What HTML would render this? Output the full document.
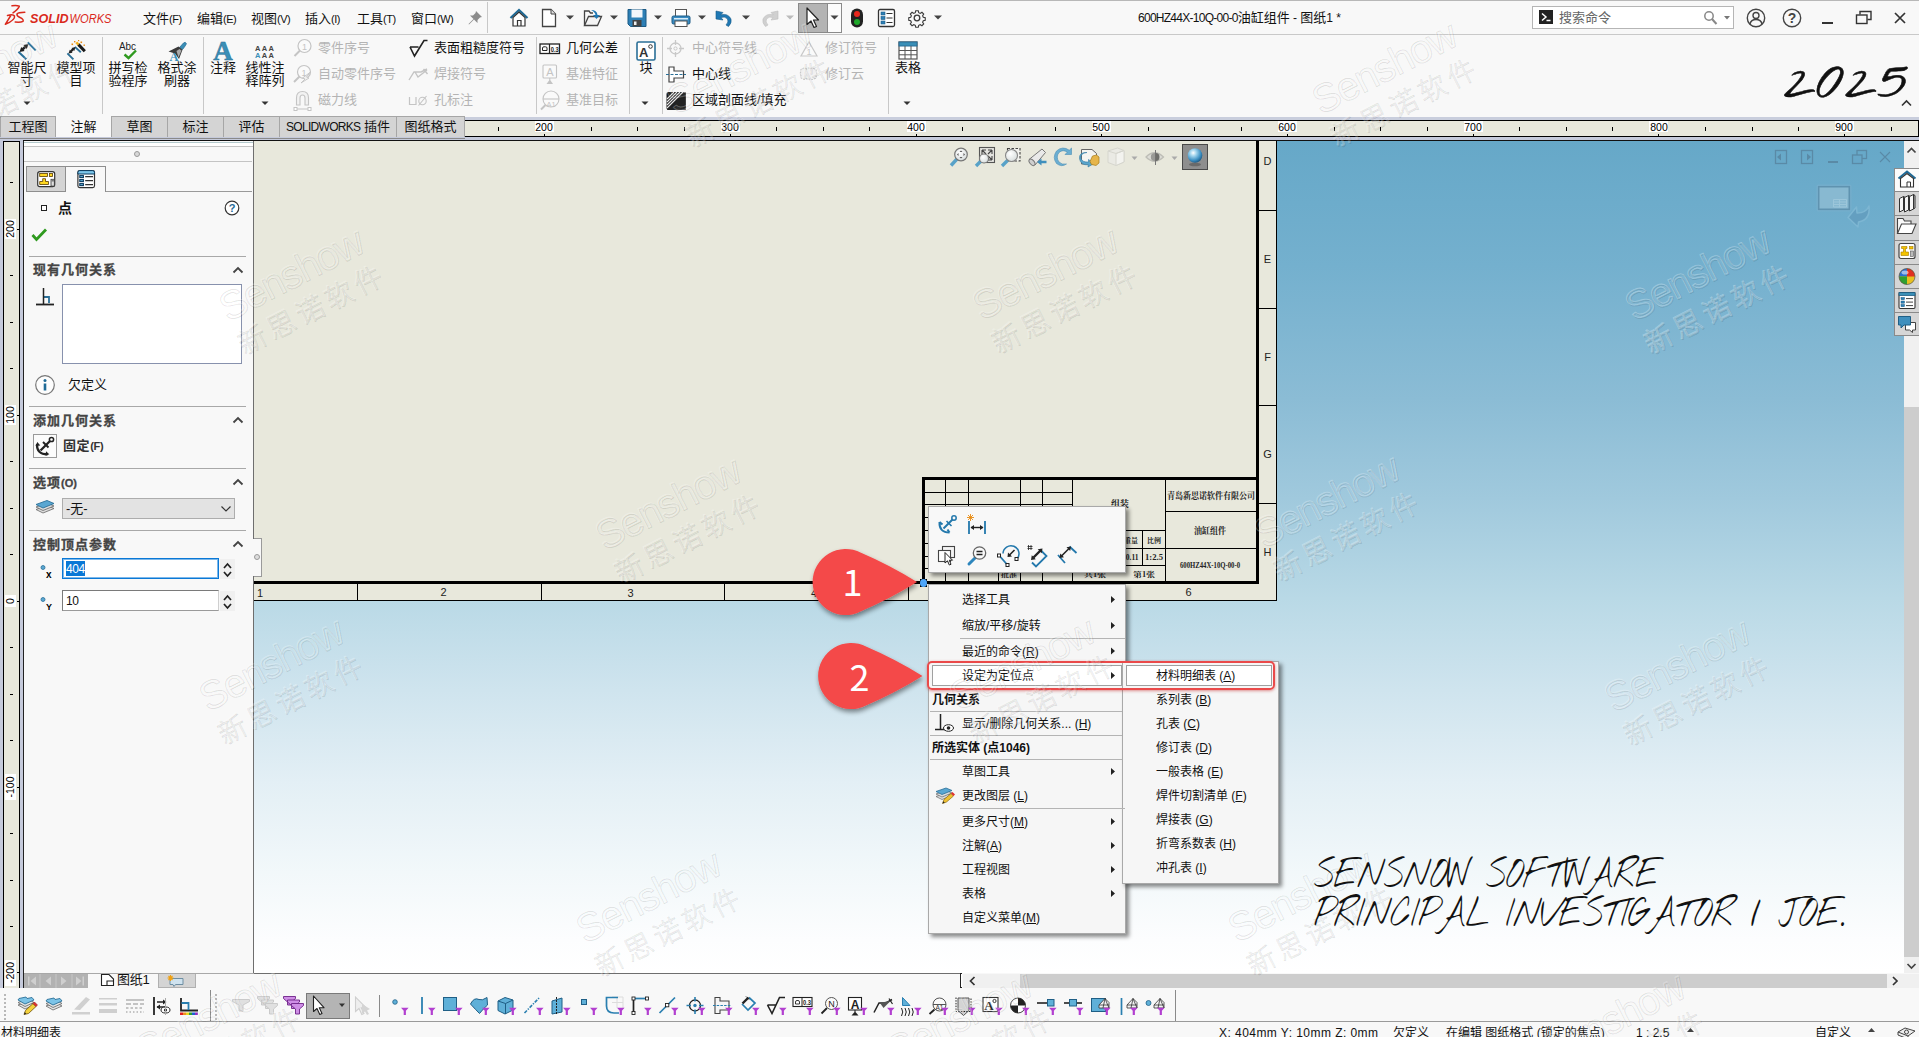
<!DOCTYPE html>
<html lang="zh-CN">
<head>
<meta charset="utf-8">
<title>SOLIDWORKS</title>
<style>
*{box-sizing:border-box;margin:0;padding:0}
html,body{width:1919px;height:1037px;overflow:hidden;background:#f8f8f8}
body{font-family:"Liberation Sans","Noto Sans CJK SC",sans-serif;font-size:13px;color:#111;position:relative}
.a{position:absolute}
.t{position:absolute;white-space:nowrap;line-height:1}
svg{position:absolute;overflow:visible}
/* title bar */
#title{left:0;top:0;width:1919px;height:35px;background:#f8f8f8;border-top:1px solid #b8b8b8;border-bottom:1px solid #c9c9c9}
#ribbon{left:0;top:35px;width:1919px;height:82px;background:#f8f8f8}
.mi{top:12px;font-size:13px;color:#111}
.mi small{font-size:11px;letter-spacing:-0.5px}
.rb{font-size:13px;color:#111;text-align:center;line-height:13px;white-space:nowrap}
.rs{font-size:13px;color:#111}
.rd{font-size:13px;color:#b4b4b4}
.vsep{width:1px;background:#c8c8c8}
.ph{font-size:13px;font-weight:bold;letter-spacing:1px;color:#444;-webkit-text-stroke:.3px #444}
.m{position:absolute;left:962px;font-size:12px;line-height:13px;white-space:nowrap;color:#111}
.m.s{left:1156px}
.m.mh{left:932px;font-weight:bold}
.m u{text-decoration-thickness:1px;text-underline-offset:1px}
.st{top:1027px;font-size:12px;color:#111}
/* tabs */
.tab{top:116px;height:22px;background:#d4d4d4;border:1px solid #a6a6a6;border-bottom:none;font-size:13px;text-align:center;line-height:19px;white-space:nowrap}
.tab.on{background:#f8f8f8;border-color:#f8f8f8}
</style>
</head>
<body>
<!-- ===== canvas ===== -->
<div class="a" id="canvas" style="left:254px;top:141px;width:1650px;height:832px;background:linear-gradient(180deg,#66a8c8 0%,#74b0ce 15%,#8bbcd5 31%,#a0c9dd 43%,#b9d9e6 55%,#cfe4ee 66%,#e3eff5 77%,#f2f8fa 88%,#fcfdfe 96%,#ffffff 100%)"></div>
<!-- sheet -->
<div class="a" id="sheet" style="left:254px;top:141px;width:1023px;height:460px;background:#e8e8dc;border-right:1px solid #000;border-bottom:1px solid #000"></div>
<svg style="left:0;top:0" width="1919" height="1037" font-family="'Liberation Sans',sans-serif" font-size="11" shape-rendering="crispEdges">
<!-- thick borders -->
<rect x="1256" y="141" width="3" height="443" fill="#000"/>
<rect x="254" y="581" width="1005" height="3" fill="#000"/>
<!-- zone strip right -->
<g stroke="#000" stroke-width="1"><path d="M1259 210.500H1277 M1259 308.500H1277 M1259 405.500H1277 M1259 503.500H1277"/>
<path d="M357.500 584V601 M541.500 584V601 M724.500 584V601 M908.500 584V601 M1092.500 584V601"/></g>
<g fill="#222" text-anchor="middle" shape-rendering="auto"><text x="1267.500" y="165">D</text><text x="1267.500" y="263">E</text><text x="1267.500" y="361">F</text><text x="1267.500" y="458">G</text><text x="1267.500" y="556">H</text>
<text x="260" y="596.500">1</text><text x="443.500" y="596">2</text><text x="630.500" y="596.500">3</text><text x="814" y="596.500">4</text><text x="1188.500" y="596">6</text></g>
<!-- title block -->
<rect x="922" y="477" width="3" height="106" fill="#000"/>
<rect x="922" y="477" width="336" height="3" fill="#000"/>
<g stroke="#000" stroke-width="1">
<path d="M945.500 480V581 M968.500 480V581 M1020.500 480V581 M1042.500 480V581 M1072.500 480V581 M1165.500 480V581 M998.500 517V581"/>
<path d="M925 492.500H1072 M925 504.500H1072 M925 517.500H1072 M925 530.500H1072 M925 543.500H1072 M925 556.500H1072 M925 568.500H1072"/>
<path d="M1072 530.500H1165 M1072 548.500H1256 M1072 565.500H1165 M1165 511.500H1256 M1119.500 530V565 M1142.500 530V565"/>
</g>
<g fill="#222" shape-rendering="auto" font-family="'Noto Serif CJK SC','Liberation Serif',serif" font-weight="bold">
<text x="1167" y="499" font-size="9.500" textLength="88" lengthAdjust="spacingAndGlyphs">青岛新思诺软件有限公司</text>
<text x="1194" y="534" font-size="9.500" textLength="32" lengthAdjust="spacingAndGlyphs">油缸组件</text>
<text x="1180" y="568" font-size="8" textLength="60" lengthAdjust="spacingAndGlyphs" font-family="'Liberation Serif',serif">600HZ44X-10Q-00-0</text>
<text x="1111" y="507" font-size="9.500" textLength="18" lengthAdjust="spacingAndGlyphs">组装</text>
<text x="1124" y="543" font-size="7" textLength="14" lengthAdjust="spacingAndGlyphs">重量</text>
<text x="1147" y="543" font-size="7" textLength="14" lengthAdjust="spacingAndGlyphs">比例</text>
<text x="1122" y="560" font-size="7.500" font-family="'Liberation Serif',serif">40.11</text>
<text x="1145" y="560" font-size="8" font-family="'Liberation Serif',serif" textLength="18" lengthAdjust="spacingAndGlyphs">1:2.5</text>
<text x="1084" y="577" font-size="7" textLength="22" lengthAdjust="spacingAndGlyphs">共1张</text>
<text x="1133" y="577" font-size="7" textLength="22" lengthAdjust="spacingAndGlyphs">第1张</text>
<text x="1001" y="577" font-size="6.500" textLength="16" lengthAdjust="spacingAndGlyphs">批准</text>
</g>
</svg>

<!-- ===== title bar ===== -->
<div class="a" id="title"></div>
<div class="a" id="ribbon"></div>
<!-- logo -->
<svg style="left:0px;top:0px" width="120" height="35" viewBox="0 0 120 35">
<g fill="none" stroke="#da291c" stroke-width="1.5" stroke-linecap="round" stroke-linejoin="round">
<path d="M12 5.800 Q16.500 5 19.300 6.200 Q18.500 9 13 12.800"/>
<path d="M7.500 15.500 Q13 13.800 14.500 16 Q15.500 20 5.300 24.300 L10.800 15.500"/>
<path d="M24.800 12.200 Q18 12.300 17 14 Q16.500 16 20 17.500 Q24 19.300 23 21.300 Q21 22.500 15.200 22"/>
</g>
<text x="30" y="23" font-family="'Liberation Sans',sans-serif" font-size="12.500" font-weight="bold" font-style="italic" fill="#da291c" textLength="38.500" lengthAdjust="spacingAndGlyphs">SOLID</text>
<text x="69.500" y="23" font-family="'Liberation Sans',sans-serif" font-size="12.500" font-style="italic" fill="#da291c" textLength="42" lengthAdjust="spacingAndGlyphs">WORKS</text>
</svg>
<div class="t mi" style="left:143px">文件<small>(F)</small></div>
<div class="t mi" style="left:197px">编辑<small>(E)</small></div>
<div class="t mi" style="left:251px">视图<small>(V)</small></div>
<div class="t mi" style="left:305px">插入<small>(I)</small></div>
<div class="t mi" style="left:357px">工具<small>(T)</small></div>
<div class="t mi" style="left:411px">窗口<small>(W)</small></div>
<!-- pin -->
<svg style="left:467px;top:10px" width="16" height="16" viewBox="0 0 16 16"><path d="M9 1 L15 7 L13 7.500 L10.500 10 L10.500 13 L7 9.500 L2 14.500 L1.500 14 L6.500 9 L3 5.500 L6 5.500 L8.500 3 Z" fill="#8c8c8c"/></svg>
<div class="a vsep" style="left:487px;top:2px;height:31px"></div>
<!-- home -->
<svg style="left:509px;top:8px" width="20" height="20" viewBox="0 0 20 20"><path d="M1.500 10 L10 2 L18.500 10" fill="none" stroke="#1f6a96" stroke-width="2.200"/><path d="M4 9.500 V18 H16 V9.500 L10 4 Z" fill="#fff" stroke="#333" stroke-width="1.200"/><path d="M8.500 18 V12.500 H12 V18" fill="none" stroke="#333" stroke-width="1.200"/></svg>
<!-- new -->
<svg style="left:541px;top:8px" width="16" height="20" viewBox="0 0 16 20"><path d="M1.500 1.500 H10 L14.500 6 V18.500 H1.500 Z" fill="#fff" stroke="#444" stroke-width="1.300"/><path d="M10 1.500 V6 H14.500" fill="#ddd" stroke="#444" stroke-width="1"/></svg>
<!-- open -->
<svg style="left:583px;top:8px" width="20" height="20" viewBox="0 0 20 20"><path d="M1.500 17.500 V3 H6 L7.500 5 H10" fill="none" stroke="#444" stroke-width="1.300"/><path d="M1.500 17.500 L5.500 8.500 H18.500 L14.500 17.500 Z" fill="#f4f4f4" stroke="#444" stroke-width="1.300"/><path d="M8 2 Q14 2 14.500 7 L17 7 L13.500 11 L10 7 L12.500 7 Q12 4 8 2 Z" fill="#1f78b4"/></svg>
<!-- save -->
<svg style="left:627px;top:8px" width="20" height="20" viewBox="0 0 20 20"><path d="M1 1.500 H19 V18.500 H3.500 L1 16 Z" fill="#2d7fb5" stroke="#1b5a85" stroke-width="1"/><rect x="4.500" y="1.500" width="11" height="8" fill="#f2f6fa"/><rect x="5.500" y="12" width="9" height="6.500" fill="#444"/><rect x="7" y="13.500" width="2.500" height="3.500" fill="#eee"/></svg>
<!-- print -->
<svg style="left:671px;top:8px" width="20" height="20" viewBox="0 0 20 20"><rect x="4.500" y="1.500" width="11" height="7" fill="#fff" stroke="#555" stroke-width="1"/><rect x="1" y="8" width="18" height="8" rx="1.500" fill="#3b8cc2" stroke="#1b5a85"/><rect x="4" y="13" width="12" height="5.500" fill="#fff" stroke="#555" stroke-width="1"/><rect x="3" y="10" width="14" height="1.500" fill="#d8ecf8"/></svg>
<!-- undo -->
<svg style="left:715px;top:8px" width="20" height="20" viewBox="0 0 20 20"><path d="M1 3 L8 4.500 L5.800 6.800 Q13 5 16 11 Q17 15 13.500 18.500 L11 17 Q14 14 12.500 11 Q10 8 6 9.500 L8 12 L1 11 Z" fill="#1f78b4" stroke="#165a88" stroke-width=".6"/></svg>
<!-- redo -->
<svg style="left:759px;top:8px" width="20" height="20" viewBox="0 0 20 20"><path d="M19 3 L12 4.500 L14.200 6.800 Q7 5 4 11 Q3 15 6.500 18.500 L9 17 Q6 14 7.500 11 Q10 8 14 9.500 L12 12 L19 11 Z" fill="#d0d0d0" stroke="#bdbdbd" stroke-width=".6"/></svg>
<!-- select -->
<div class="a" style="left:798px;top:3px;width:44px;height:30px;border:1px solid #8a8a8a;background:#fbfbfb"></div>
<div class="a" style="left:798px;top:3px;width:30px;height:30px;background:#b4b4b4;border:1px solid #8a8a8a"></div>
<svg style="left:805px;top:7px" width="16" height="22" viewBox="0 0 16 22"><path d="M2 1 V17.500 L6 14 L9 20.500 L11.500 19.500 L8.500 13 H13.500 Z" fill="#fff" stroke="#222" stroke-width="1.200" stroke-linejoin="round"/></svg>
<!-- traffic light -->
<svg style="left:849px;top:8px" width="16" height="20" viewBox="0 0 16 20"><rect x="2" y=".5" width="12" height="19" rx="6" fill="#222"/><circle cx="8" cy="6" r="3" fill="#e8281e"/><circle cx="8" cy="14" r="3" fill="#1ea82a"/></svg>
<!-- options list -->
<svg style="left:877px;top:8px" width="20" height="20" viewBox="0 0 20 20"><rect x="1.500" y="1.500" width="16" height="17" rx="1.500" fill="#fff" stroke="#333" stroke-width="1.300"/><g fill="#2d7fb5" stroke="#1b5a85" stroke-width=".6"><rect x="4" y="4" width="4" height="3"/><rect x="4" y="8.500" width="4" height="3"/><rect x="4" y="13" width="4" height="3"/></g><g stroke="#333" stroke-width="1.200"><path d="M9.500 5.500 H15.500 M9.500 10 H15.500 M9.500 14.500 H15.500"/></g></svg>
<!-- gear -->
<svg style="left:907px;top:8px" width="20" height="20" viewBox="0 0 20 20"><g fill="none" stroke="#3a3a3a" stroke-width="1.300"><circle cx="10" cy="10" r="2.800"/><path d="M8.500 1.500 h3 l.5 2.300 l1.800 .8 l2 -1.300 l2.100 2.100 l-1.300 2 l.8 1.800 l2.300 .5 v3 l-2.300 .5 l-.8 1.800 l1.300 2 l-2.100 2.100 l-2 -1.300 l-1.800 .8 l-.5 2.300 h-3 l-.5 -2.300 l-1.800 -.8 l-2 1.300 l-2.100 -2.100 l1.300 -2 l-.8 -1.800 l-2.300 -.5 v-3 l2.300 -.5 l.8 -1.800 l-1.300 -2 l2.100 -2.100 l2 1.300 l1.800 -.8 z" transform="translate(1.500 1.500) scale(.85)"/></g></svg>
<!-- dropdown arrows -->
<svg style="left:0;top:0" width="1000" height="36"><g fill="#444"><path d="M566 15.500 h8 l-4 4z"/><path d="M610 15.500 h8 l-4 4z"/><path d="M654 15.500 h8 l-4 4z"/><path d="M698 15.500 h8 l-4 4z"/><path d="M742 15.500 h8 l-4 4z"/><path d="M786 15.500 h8 l-4 4z" fill="#bbb"/><path d="M830.500 15.500 h8 l-4 4z"/><path d="M934 15.500 h8 l-4 4z"/></g></svg>
<!-- doc title -->
<div class="t" style="left:1138px;top:11px;font-size:13px;color:#111"><span style="font-size:12px;letter-spacing:-.73px">600HZ44X-10Q-00-0</span>油缸组件<span style="font-size:12px"> - </span>图纸<span style="font-size:12px">1 *</span></div>
<!-- search -->
<div class="a" style="left:1532px;top:6px;width:202px;height:23px;border:1px solid #b5b5b5;background:#fff"></div>
<div class="a" style="left:1539px;top:10px;width:14px;height:14px;background:#222"></div>
<svg style="left:1539px;top:10px" width="14" height="14" viewBox="0 0 14 14"><path d="M3 3.500 L7 7 L3 10.500 M7.500 10.500 H11.500" fill="none" stroke="#fff" stroke-width="1.500"/></svg>
<div class="t" style="left:1559px;top:11px;font-size:13px;color:#666">搜索命令</div>
<svg style="left:1702px;top:9px" width="32" height="18" viewBox="0 0 32 18"><circle cx="7" cy="7" r="4.200" fill="none" stroke="#888" stroke-width="1.500"/><path d="M10 10 L14.500 15" stroke="#888" stroke-width="2"/><path d="M22 7 h6 l-3 3.500z" fill="#777"/></svg>
<!-- user / help / window buttons -->
<svg style="left:1745px;top:7px" width="22" height="22" viewBox="0 0 22 22"><circle cx="11" cy="11" r="8.700" fill="none" stroke="#444" stroke-width="1.400"/><circle cx="11" cy="8.500" r="3" fill="none" stroke="#444" stroke-width="1.400"/><path d="M5 17 Q6 12.500 11 12.500 Q16 12.500 17 17" fill="none" stroke="#444" stroke-width="1.400"/></svg>
<svg style="left:1781px;top:7px" width="22" height="22" viewBox="0 0 22 22"><circle cx="11" cy="11" r="8.700" fill="none" stroke="#444" stroke-width="1.400"/><text x="11" y="16" text-anchor="middle" font-family="'Liberation Sans',sans-serif" font-size="14" font-weight="bold" fill="#444">?</text></svg>
<div class="a" style="left:1822px;top:22px;width:11px;height:2px;background:#333"></div>
<svg style="left:1855px;top:10px" width="18" height="16" viewBox="0 0 18 16"><path d="M5 4.500 V1.500 H16 V9.500 H12.500" fill="none" stroke="#333" stroke-width="1.400"/><rect x="1.500" y="5" width="10.500" height="8.500" fill="none" stroke="#333" stroke-width="1.400"/></svg>
<svg style="left:1894px;top:12px" width="12" height="12" viewBox="0 0 12 12"><path d="M1 1 L11 11 M11 1 L1 11" stroke="#333" stroke-width="1.700"/></svg>

<!-- separators -->
<div class="a vsep" style="left:102px;top:37px;height:77px"></div>
<div class="a vsep" style="left:203px;top:37px;height:77px"></div>
<div class="a vsep" style="left:536px;top:37px;height:77px"></div>
<div class="a vsep" style="left:629px;top:37px;height:77px"></div>
<div class="a vsep" style="left:662px;top:37px;height:77px"></div>
<div class="a vsep" style="left:888px;top:37px;height:77px"></div>
<!-- large buttons -->
<div class="a rb" style="left:2px;top:61px;width:50px">智能尺<br>寸</div>
<div class="a rb" style="left:51px;top:61px;width:50px">模型项<br>目</div>
<div class="a rb" style="left:103px;top:61px;width:50px">拼写检<br>验程序</div>
<div class="a rb" style="left:152px;top:61px;width:50px">格式涂<br>刷器</div>
<div class="a rb" style="left:198px;top:61px;width:50px">注释</div>
<div class="a rb" style="left:240px;top:61px;width:50px">线性注<br>释阵列</div>
<div class="a rb" style="left:621px;top:61px;width:50px">块</div>
<div class="a rb" style="left:883px;top:61px;width:50px">表格</div>
<!-- smart dimension icon -->
<svg style="left:17px;top:40px" width="22" height="22" viewBox="0 0 22 22"><path d="M1.400 11.800 L9.300 19.300 M10.800 2.400 L18.700 10.400" stroke="#2a6f97" stroke-width="2" fill="none"/><path d="M2.500 12 L7.600 10.950 L4.200 7.050Z M11.500 4 L9.800 8.950 L6.400 5.050Z" fill="#222"/><path d="M5.500 9.400 L8.500 6.700" stroke="#222" stroke-width="2.600"/></svg>
<!-- model items icon -->
<svg style="left:66px;top:40px" width="22" height="22" viewBox="0 0 22 22"><path d="M1.400 13.300 L7.400 19.300 M8.900 6.900 L14.800 12.300" stroke="#2a6f97" stroke-width="1.900" fill="none"/><path d="M2.500 13.500 L6.500 12.700 L3.800 9.700Z M9.500 7 L8.300 10.900 L5.500 7.900Z" fill="#222"/><path d="M4.800 11.300 L7.200 9.200" stroke="#222" stroke-width="2.200"/><path d="M12.300 4.400 L18.800 11.300" stroke="#1a1a1a" stroke-width="3"/><path d="M10.300 2.400 L12.500 4.600" stroke="#f0b020" stroke-width="2.600"/><g fill="#e88a10"><rect x="5.500" y="3.500" width="1.600" height="1.600"/><rect x="8" y="1" width="1.400" height="1.400"/><rect x="14.500" y="1.500" width="1.600" height="1.600"/><rect x="17.500" y="4.500" width="1.400" height="1.400"/><rect x="12" y="0" width="1.200" height="1.200"/></g></svg>
<!-- spell check -->
<svg style="left:116px;top:40px" width="24" height="22" viewBox="0 0 24 22"><text x="3" y="10" font-family="'Liberation Sans',sans-serif" font-size="10.500" fill="#222" textLength="17" lengthAdjust="spacingAndGlyphs">Abc</text><path d="M8.500 14.500 L12.500 18 L20 10.500" fill="none" stroke="#2f9a1f" stroke-width="2.400"/></svg>
<!-- format painter -->
<svg style="left:166px;top:40px" width="22" height="22" viewBox="0 0 22 22"><path d="M13.500 7.500 L17.500 3 Q19.500 1.500 20.300 3.500 Q20.500 4.500 16.500 9.500Z" fill="#3a8fb7" stroke="#2a6f97" stroke-width=".8"/><path d="M2.500 11.500 L12.500 6.500 L16.500 9.800 L13 19 L9 13.500Z" fill="#3a3a3a"/><path d="M10.500 11 L13.500 9 L15.500 10.500 L12.500 17.500Z" fill="#aaa"/><text x="3.500" y="21" font-family="'Liberation Serif',serif" font-size="12.500" font-weight="bold" fill="#3a8fb7">A</text></svg>
<!-- note A -->
<svg style="left:211px;top:38px" width="24" height="24" viewBox="0 0 24 24"><text x="12" y="22" text-anchor="middle" font-family="'Liberation Serif',serif" font-size="27" font-weight="bold" fill="#3a8fb7" stroke="#2a7096" stroke-width=".5">A</text></svg>
<!-- linear note pattern -->
<svg style="left:254px;top:44px" width="22" height="15" viewBox="0 0 22 15"><text x="1" y="6.500" font-family="'Liberation Sans',sans-serif" font-size="7.500" font-weight="bold" fill="#444" textLength="19" lengthAdjust="spacing">AAA</text><text x="1" y="14" font-family="'Liberation Sans',sans-serif" font-size="7.500" font-weight="bold" fill="#444" textLength="19" lengthAdjust="spacing"><tspan fill="#3a8fb7">A</tspan>AA</text></svg>
<!-- block icon -->
<svg style="left:636px;top:41px" width="20" height="20" viewBox="0 0 20 20"><rect x="1" y="1" width="18" height="18" rx="1.500" fill="#fff" stroke="#2a6f97" stroke-width="1.600"/><text x="3" y="15.500" font-family="'Liberation Sans',sans-serif" font-size="13" font-weight="bold" fill="#333">A</text><circle cx="14.500" cy="5.500" r="1.800" fill="none" stroke="#333" stroke-width="1"/></svg>
<!-- table icon -->
<svg style="left:898px;top:41px" width="20" height="19" viewBox="0 0 20 19"><rect x="1" y="1" width="18" height="17" fill="#fff" stroke="#555" stroke-width="1.200"/><rect x="1" y="1" width="18" height="4" fill="#3a8fb7" stroke="#2a6f97" stroke-width="1"/><path d="M7 5 V18 M13 5 V18 M1 9.500 H19 M1 13.800 H19" stroke="#555" stroke-width="1"/></svg>
<!-- dropdown arrows -->
<svg style="left:0;top:0" width="1919" height="118"><g fill="#333"><path d="M23.500 101.500 h7 l-3.500 3.500z"/><path d="M261.500 101.500 h7 l-3.500 3.500z"/><path d="M641.500 101.500 h7 l-3.500 3.500z"/><path d="M903.500 101.500 h7 l-3.500 3.500z"/></g><path d="M1902 105.500 L1906.500 101 L1911 105.500" fill="none" stroke="#333" stroke-width="1.600"/></svg>
<!-- small rows col A (disabled) -->
<div class="t rd" style="left:318px;top:41px">零件序号</div>
<div class="t rd" style="left:318px;top:67px">自动零件序号</div>
<div class="t rd" style="left:318px;top:93px">磁力线</div>
<svg style="left:293px;top:38px" width="20" height="20" viewBox="0 0 20 20"><circle cx="11.500" cy="8" r="6.500" fill="#fafafa" stroke="#c4c4c4" stroke-width="1.200"/><text x="11.500" y="11.500" text-anchor="middle" font-family="'Liberation Sans',sans-serif" font-size="9" fill="#c4c4c4">1</text><path d="M7 12.500 L1.500 18" stroke="#c4c4c4" stroke-width="2"/></svg>
<svg style="left:293px;top:64px" width="20" height="20" viewBox="0 0 20 20"><circle cx="11" cy="8" r="6.500" fill="#fafafa" stroke="#c4c4c4" stroke-width="1.200"/><text x="11" y="11.500" text-anchor="middle" font-family="'Liberation Sans',sans-serif" font-size="9" fill="#c4c4c4">1</text><path d="M6.500 12.500 L1 18" stroke="#c4c4c4" stroke-width="2"/><path d="M17.500 8 L9.500 14 L12 15 L8 19 L16 14 L13.500 13Z" fill="#f0f0f0" stroke="#c4c4c4" stroke-width=".9"/></svg>
<svg style="left:293px;top:90px" width="20" height="22" viewBox="0 0 20 22"><path d="M3.500 15 V8 Q3.500 1.500 9.500 1.500 Q15.500 1.500 15.500 8 V15 H12 V8 Q12 5 9.500 5 Q7 5 7 8 V15Z" fill="#f2f2f2" stroke="#c4c4c4" stroke-width="1.100"/><path d="M3 19 H16" stroke="#c4c4c4" stroke-width="1"/><rect x="1" y="17.500" width="3" height="3" fill="#fff" stroke="#c4c4c4"/><rect x="15" y="17.500" width="3" height="3" fill="#fff" stroke="#c4c4c4"/></svg>
<!-- col B -->
<div class="t rs" style="left:434px;top:41px">表面粗糙度符号</div>
<div class="t rd" style="left:434px;top:67px">焊接符号</div>
<div class="t rd" style="left:434px;top:93px">孔标注</div>
<svg style="left:408px;top:38px" width="22" height="22" viewBox="0 0 22 22"><path d="M2 9 L6.500 18 L16 2.500 H19.500 M2 9 H10.500" fill="none" stroke="#222" stroke-width="1.600"/></svg>
<svg style="left:408px;top:66px" width="22" height="16" viewBox="0 0 22 16"><path d="M1 14 L6 6 H13 L19 3 M7 6 L10 11 L19 4 M15.500 3 L19.500 8" fill="none" stroke="#c4c4c4" stroke-width="1.400"/></svg>
<svg style="left:408px;top:94px" width="22" height="14" viewBox="0 0 22 14"><path d="M1.500 3 V10.500 H8 V3" fill="none" stroke="#c4c4c4" stroke-width="1.200"/><circle cx="14.500" cy="7" r="3.700" fill="none" stroke="#c4c4c4" stroke-width="1.100"/><path d="M10.500 11.500 L18.500 2" stroke="#c4c4c4" stroke-width="1.100"/></svg>
<!-- col C -->
<div class="t rs" style="left:566px;top:41px">几何公差</div>
<div class="t rd" style="left:566px;top:67px">基准特征</div>
<div class="t rd" style="left:566px;top:93px">基准目标</div>
<svg style="left:539px;top:43px" width="22" height="12" viewBox="0 0 22 12"><rect x="1" y="1" width="19.500" height="9.500" fill="#fff" stroke="#222" stroke-width="1.300"/><path d="M10.500 1 V10.500" stroke="#222" stroke-width="1.200"/><path d="M3.500 7.500 V5 Q3.500 3.800 5 3.800 H6.500 Q8 3.800 8 5 V7.500Z" fill="none" stroke="#222" stroke-width="1"/><text x="11.800" y="9" font-family="'Liberation Sans',sans-serif" font-size="7.500" font-weight="bold" fill="#222" textLength="8" lengthAdjust="spacingAndGlyphs">0.3</text></svg>
<svg style="left:541px;top:64px" width="18" height="21" viewBox="0 0 18 21"><rect x="2" y="1" width="13.500" height="13" rx="1" fill="#fafafa" stroke="#c4c4c4" stroke-width="1.100"/><text x="8.800" y="12" text-anchor="middle" font-family="'Liberation Sans',sans-serif" font-size="11" fill="#c4c4c4">A</text><path d="M8.800 14 V16.500" stroke="#c4c4c4"/><path d="M5.500 20 H12 L8.800 15.500Z" fill="#c4c4c4"/></svg>
<svg style="left:539px;top:90px" width="22" height="22" viewBox="0 0 22 22"><circle cx="12" cy="9" r="8" fill="#fafafa" stroke="#c4c4c4" stroke-width="1.100"/><path d="M4 9 H20" stroke="#c4c4c4" stroke-width="1.100"/><text x="12" y="16.500" text-anchor="middle" font-family="'Liberation Sans',sans-serif" font-size="7.500" fill="#c4c4c4">A1</text><path d="M6.500 15 L2 19.500" stroke="#c4c4c4" stroke-width="2"/></svg>
<!-- col D -->
<div class="t rd" style="left:692px;top:41px">中心符号线</div>
<div class="t rs" style="left:692px;top:67px">中心线</div>
<div class="t rs" style="left:692px;top:93px">区域剖面线/填充</div>
<svg style="left:666px;top:39px" width="20" height="20" viewBox="0 0 20 20"><circle cx="9.500" cy="9.500" r="5.500" fill="none" stroke="#c8c8c8" stroke-width="1.300"/><circle cx="9.500" cy="9.500" r="1.600" fill="none" stroke="#c8c8c8" stroke-width="1"/><path d="M9.500 1 V6 M9.500 13 V18 M1 9.500 H6 M13 9.500 H18" stroke="#c8c8c8" stroke-width="1.300"/></svg>
<svg style="left:666px;top:65px" width="20" height="20" viewBox="0 0 20 20"><path d="M3 2 H8 V6 H17.500 V13 H8 V17 H3Z" fill="#fff" stroke="#444" stroke-width="1.200"/><path d="M0 9.500 H20" stroke="#2a6f97" stroke-width="1" stroke-dasharray="3 1.500"/></svg>
<svg style="left:666px;top:91px" width="20" height="20" viewBox="0 0 20 20"><rect x=".5" y="1" width="19" height="18" rx="2" fill="#1a1a1a"/><path d="M1 19 L19.500 1 V19Z" fill="#2e2e2e"/><path d="M1 8 L8 1 M1 11 L11 1 M1 14 L14 1 M1 17 L17 1" stroke="#e6e6e6" stroke-width="1.100"/><path d="M1 19 L19.500 1 V19Z" fill="#222"/></svg>
<!-- col E -->
<div class="t rd" style="left:825px;top:41px">修订符号</div>
<div class="t rd" style="left:825px;top:67px">修订云</div>
<svg style="left:799px;top:40px" width="20" height="18" viewBox="0 0 20 18"><path d="M10 2 L18 16 H2Z" fill="#fafafa" stroke="#c8c8c8" stroke-width="1.200"/><text x="10" y="14.500" text-anchor="middle" font-family="'Liberation Sans',sans-serif" font-size="9" fill="#c8c8c8">1</text></svg>
<svg style="left:799px;top:66px" width="20" height="16" viewBox="0 0 20 16"><path d="M3.500 3 Q5.500 1 7.500 3 Q9.500 1 11.500 3 Q13.500 1 15.500 3 Q18 3 17 5.500 Q18.500 7.500 17 9.500 Q18 12.500 15.500 12.500 Q13.500 14.500 11.500 12.500 Q9.500 14.500 7.500 12.500 Q5.500 14.500 3.500 12.500 Q1 12.500 2 9.500 Q.5 7.500 2 5.500 Q1 3 3.500 3Z" fill="#f0f0f0" stroke="#c8c8c8" stroke-width="1.100" stroke-dasharray="2 1"/></svg>
<!-- 2025 -->
<svg style="left:1774px;top:57px" width="136" height="56" viewBox="0 0 136 56"><text x="9" y="40" font-family="'Nothing You Could Do','Nanum Pen','Liberation Sans',sans-serif" font-size="50" fill="#111" stroke="#111" stroke-width=".5" textLength="126" lengthAdjust="spacingAndGlyphs">2025</text></svg>


<div class="a tab" style="left:0;width:56px">工程图</div>
<div class="a tab on" style="left:56px;width:55px">注解</div>
<div class="a tab" style="left:111px;width:57px">草图</div>
<div class="a tab" style="left:167px;width:57px">标注</div>
<div class="a tab" style="left:223px;width:57px">评估</div>
<div class="a tab" style="left:279px;width:118px"><span style="font-size:12px;letter-spacing:-.7px">SOLIDWORKS</span> 插件</div>
<div class="a tab" style="left:396px;width:69px">图纸格式</div>

<!-- top ruler -->
<div class="a" style="left:465px;top:117px;width:1454px;height:4px;background:#c9cedd"></div>
<div class="a" style="left:465px;top:120px;width:1454px;height:17px;background:#e8e8dc;border:1px solid #000;border-left:none"></div>
<div class="a" style="left:0;top:137px;width:1919px;height:4px;background:#c5cadb"></div>
<div class="a" style="left:0;top:138px;width:465px;height:1px;background:#8a8a8a"></div>
<div class="a" style="left:23px;top:140px;width:1896px;height:1px;background:#111"></div>
<svg style="left:0;top:117px" width="1919" height="24" font-family="'Liberation Sans',sans-serif" font-size="10.500">
<g stroke="#000" stroke-width="1">
<path d="M498.500 10v4 M591.500 10v4 M637.500 10v4 M684.500 10v4 M776.500 10v4 M823.500 10v4 M869.500 10v4 M962.500 10v4 M1009.500 10v4 M1055.500 10v4 M1148.500 10v4 M1194.500 10v4 M1241.500 10v4 M1334.500 10v4 M1380.500 10v4 M1427.500 10v4 M1519.500 10v4 M1566.500 10v4 M1612.500 10v4 M1705.500 10v4 M1752.500 10v4 M1798.500 10v4 M1891.500 10v4"/>
<path d="M544.500 17v3 M730.500 17v3 M916.500 17v3 M1101.500 17v3 M1287.500 17v3 M1473.500 17v3 M1658.500 17v3 M1844.500 17v3"/>
</g>
<g fill="#fff"><rect x="535" y="4" width="19" height="11"/><rect x="721" y="4" width="19" height="11"/><rect x="907" y="4" width="19" height="11"/><rect x="1092" y="4" width="19" height="11"/><rect x="1278" y="4" width="19" height="11"/><rect x="1464" y="4" width="19" height="11"/><rect x="1649" y="4" width="19" height="11"/><rect x="1835" y="4" width="19" height="11"/></g>
<g fill="#000" text-anchor="middle"><text x="544" y="13.500">200</text><text x="730" y="13.500">300</text><text x="916" y="13.500">400</text><text x="1101" y="13.500">500</text><text x="1287" y="13.500">600</text><text x="1473" y="13.500">700</text><text x="1659" y="13.500">800</text><text x="1844" y="13.500">900</text></g>
</svg>
<!-- left ruler -->
<div class="a" style="left:0;top:141px;width:24px;height:849px;background:#c5cadb"></div>
<div class="a" style="left:3px;top:141px;width:17px;height:832px;background:#e8e8dc;border:1px solid #000;border-bottom:none"></div>
<div class="a" style="left:23px;top:141px;width:1px;height:832px;background:#222"></div>
<svg style="left:0;top:141px" width="24" height="832" font-family="'Liberation Sans',sans-serif" font-size="10.500">
<g stroke="#000" stroke-width="1"><path d="M10 41.5h3 M10 134.5h3 M10 181.5h3 M10 227.5h3 M10 320.5h3 M10 367.5h3 M10 413.5h3 M10 506.5h3 M10 553.5h3 M10 599.5h3 M10 692.5h3 M10 739.5h3 M10 785.5h3"/><path d="M17 88.5h3 M17 274.5h3 M17 460.5h3 M17 646.5h3 M17 831.5h3"/></g>
<g fill="#fff"><rect x="5" y="78" width="11" height="20"/><rect x="5" y="264" width="11" height="20"/><rect x="5" y="454" width="11" height="12"/><rect x="5" y="633" width="11" height="26"/></g>
<g fill="#000" text-anchor="middle"><text transform="translate(14 88) rotate(-90)">200</text><text transform="translate(14 274) rotate(-90)">100</text><text transform="translate(14 460) rotate(-90)">0</text><text transform="translate(14 646) rotate(-90)">-100</text></g>
</svg>

<div class="a" id="panel" style="left:24px;top:141px;width:230px;height:832px;background:#f8f8f8;border-right:1px solid #6e6e6e"></div>
<div class="a" style="left:24px;top:142px;width:229px;height:1px;background:#b4cacd"></div><div class="a" style="left:24px;top:143px;width:229px;height:3px;background:#fff"></div><div class="a" style="left:24px;top:146px;width:229px;height:1px;background:#c4c4c4"></div>
<div class="a" style="left:134px;top:151px;width:6px;height:6px;border-radius:50%;border:1px solid #9a9a9a;background:#d8d8d8"></div>
<div class="a" style="left:24px;top:161px;width:228px;height:1px;background:#c4c4c4"></div>
<!-- panel tabs -->
<div class="a" style="left:26px;top:191px;width:226px;height:1px;background:#9a9a9a"></div>
<div class="a" style="left:26px;top:166px;width:40px;height:26px;background:#d4d4d4;border:1px solid #8e8e8e"></div>
<div class="a" style="left:65px;top:166px;width:41px;height:26px;background:#f8f8f8;border:1px solid #8e8e8e;border-bottom:none"></div>
<svg style="left:24px;top:162px" width="90" height="34" viewBox="24 162 90 34">
<rect x="37.700" y="171.700" width="17" height="15" rx="2.200" fill="#fff" stroke="#333" stroke-width="1.200"/>
<g fill="#ffd820" stroke="#5a3c00" stroke-width=".8"><rect x="39.700" y="173.500" width="7.800" height="3"/><rect x="49.500" y="173.500" width="3" height="3"/><path d="M42.700 178.700 H45.500 V181.500 H48.500 V184.500 H39.700 V181.500 H42.700Z"/></g>
<rect x="51" y="179.300" width="3.300" height="6.800" fill="#ddd" stroke="#333" stroke-width=".8"/><rect x="51.400" y="179.700" width="2.500" height="1.800" fill="#777"/>
<rect x="77.900" y="170.600" width="16.600" height="17" rx="1.800" fill="#fff" stroke="#333" stroke-width="1.200"/>
<path d="M77.900 174 V172.400 Q77.900 170.600 79.700 170.600 H92.700 Q94.500 170.600 94.500 172.400 V174Z" fill="#7cc6ea" stroke="#0b3a5e" stroke-width="1"/>
<g fill="#6ab8e0" stroke="#0b3a5e" stroke-width="1.100"><rect x="79.800" y="175.600" width="3.600" height="2"/><rect x="79.800" y="179.600" width="3.600" height="2"/><rect x="79.800" y="183.600" width="3.600" height="2"/></g>
<path d="M85.200 176.600 H93 M85.200 180.600 H93 M85.200 184.600 H93" stroke="#333" stroke-width="1.100"/>
</svg>
<!-- point header -->
<div class="a" style="left:41px;top:205px;width:6px;height:6px;border:1.500px solid #222;background:#fff"></div>
<div class="t" style="left:58px;top:201px;font-size:14px;font-weight:bold;color:#111">点</div>
<svg style="left:224px;top:200px" width="16" height="16" viewBox="0 0 16 16"><circle cx="8" cy="8" r="6.800" fill="#fff" stroke="#333" stroke-width="1.200"/><text x="8" y="12" text-anchor="middle" font-family="'Liberation Sans',sans-serif" font-size="11" font-weight="bold" fill="#1f6a96">?</text></svg>
<svg style="left:31px;top:227px" width="17" height="15" viewBox="0 0 17 15"><path d="M1.500 8 L5.500 12.500 L15 2.500" fill="none" stroke="#2f9a1f" stroke-width="2.800"/></svg>
<!-- section 1 -->
<div class="a" style="left:29px;top:256px;width:217px;height:1px;background:#a8a8a8"></div>
<div class="t ph" style="left:33px;top:263px">现有几何关系</div>
<svg class="car" style="left:232px;top:266px" width="12" height="8"><path d="M1.500 6.500 L6 2 L10.500 6.500" fill="none" stroke="#444" stroke-width="1.800"/></svg>
<div class="a" style="left:62px;top:284px;width:180px;height:80px;background:#fff;border:1px solid #8791ad"></div>
<svg style="left:35px;top:287px" width="20" height="20" viewBox="0 0 20 20"><path d="M8.500 10 H14 V16" fill="none" stroke="#2a6f97" stroke-width="1.800"/><path d="M8.500 1 V17" stroke="#222" stroke-width="1.500"/><path d="M1 17.500 H19" stroke="#222" stroke-width="1.800"/></svg>
<svg style="left:34px;top:374px" width="22" height="22" viewBox="0 0 22 22"><circle cx="11" cy="11" r="9.300" fill="#fdfdfd" stroke="#777" stroke-width="1.200"/><circle cx="11" cy="6.500" r="1.500" fill="#1f6a96"/><path d="M11 9.500 V16.500" stroke="#1f6a96" stroke-width="2.600"/></svg>
<div class="t" style="left:68px;top:378px">欠定义</div>
<!-- section 2 -->
<div class="a" style="left:29px;top:406px;width:217px;height:1px;background:#a8a8a8"></div>
<div class="t ph" style="left:33px;top:414px">添加几何关系</div>
<svg class="car" style="left:232px;top:416px" width="12" height="8"><path d="M1.500 6.500 L6 2 L10.500 6.500" fill="none" stroke="#444" stroke-width="1.800"/></svg>
<div class="a" style="left:33px;top:434px;width:24px;height:24px;border:1px solid #9a9a9a;background:#fcfcfc"></div>
<svg style="left:35px;top:436px" width="20" height="20" viewBox="0 0 20 20"><path d="M15.500 4.500 L5.500 14.500" stroke="#222" stroke-width="2.300"/><circle cx="16.500" cy="3.500" r="2.100" fill="#fff" stroke="#222" stroke-width="1.500"/><path d="M8 6 L13.500 11.500" stroke="#222" stroke-width="1.900"/><path d="M2 8 Q1.500 18.300 12.500 18.300" fill="none" stroke="#222" stroke-width="2.200"/><path d="M0.500 10 L2.300 6 L5.300 9.500Z M10.500 19.800 L14.300 18.300 L11 15.300Z" fill="#222"/></svg>
<div class="t" style="left:63px;top:439px;font-size:13px;font-weight:bold;letter-spacing:.6px;color:#333">固定<span style="font-size:11px;letter-spacing:-.3px">(F)</span></div>
<!-- section 3 -->
<div class="a" style="left:29px;top:468px;width:217px;height:1px;background:#a8a8a8"></div>
<div class="t ph" style="left:33px;top:476px">选项<span style="font-size:11px;letter-spacing:0">(O)</span></div>
<svg class="car" style="left:232px;top:478px" width="12" height="8"><path d="M1.500 6.500 L6 2 L10.500 6.500" fill="none" stroke="#444" stroke-width="1.800"/></svg>
<svg style="left:35px;top:499px" width="20" height="16" viewBox="0 0 20 16"><path d="M1 10.500 L8 14 L19 9.500 L12 6.500Z" fill="#ddd" stroke="#666" stroke-width=".8"/><path d="M1 8 L8 11.500 L19 7 L12 4Z" fill="#ddd" stroke="#666" stroke-width=".8"/><path d="M1 5.500 L8 9 L19 4.500 L12 1.500Z" fill="#5aa7d2" stroke="#2a6f97" stroke-width=".9"/></svg>
<div class="a" style="left:62px;top:498px;width:173px;height:21px;background:#e3e3e3;border:1px solid #adadad"></div>
<div class="t" style="left:66px;top:502px;font-size:13px">-无-</div>
<svg style="left:220px;top:505px" width="12" height="8"><path d="M1.500 1.500 L6 6 L10.500 1.500" fill="none" stroke="#333" stroke-width="1.200"/></svg>
<!-- section 4 -->
<div class="a" style="left:29px;top:530px;width:217px;height:1px;background:#a8a8a8"></div>
<div class="t ph" style="left:33px;top:538px">控制顶点参数</div>
<svg class="car" style="left:232px;top:540px" width="12" height="8"><path d="M1.500 6.500 L6 2 L10.500 6.500" fill="none" stroke="#444" stroke-width="1.800"/></svg>
<div class="a" style="left:62px;top:558px;width:157px;height:21px;background:#fff;border:1px solid #0a78d6;box-shadow:inset 0 0 0 1px #7db8ea"></div>
<div class="a" style="left:66px;top:561px;width:19px;height:15px;background:#0a78d6"></div>
<div class="t" style="left:66px;top:563px;font-size:12px;color:#fff;letter-spacing:-.4px">404</div>
<div class="a" style="left:62px;top:590px;width:157px;height:21px;background:#fff;border:1px solid #7a7a7a;border-right-color:#cfcfcf;border-bottom-color:#9a9a9a"></div>
<div class="t" style="left:66px;top:595px;font-size:12px;color:#111;letter-spacing:-.4px">10</div>
<svg style="left:220px;top:558px" width="16" height="56"><rect x="0" y="1" width="15" height="20" fill="#f0f0f0"/><rect x="0" y="33" width="15" height="20" fill="#f0f0f0"/><g fill="none" stroke="#222" stroke-width="1.700"><path d="M4 10 L7.500 6 L11 10 M4 14 L7.500 18 L11 14 M4 42 L7.500 38 L11 42 M4 46 L7.500 50 L11 46"/></g></svg>
<svg style="left:38px;top:562px" width="18" height="54" font-family="'Liberation Sans',sans-serif" font-weight="bold" font-size="10"><circle cx="5" cy="5.500" r="2" fill="#5aa7d2" stroke="#2a6f97" stroke-width=".8"/><text x="8" y="16">x</text><circle cx="5" cy="37.500" r="2" fill="#5aa7d2" stroke="#2a6f97" stroke-width=".8"/><text x="8" y="48" font-size="9">Y</text></svg>
<!-- flyout handle -->
<div class="a" style="left:253px;top:539px;width:1px;height:37px;background:#f8f8f8"></div>
<div class="a" style="left:254px;top:538px;width:8px;height:39px;background:#f8f8f8;border:1px solid #9a9a9a;border-left:none"></div>
<div class="a" style="left:254px;top:554px;width:6px;height:6px;border-radius:50%;border:1px solid #9a9a9a;background:#ddd"></div>

<!-- heads-up toolbar -->
<svg style="left:940px;top:140px" width="280" height="40" viewBox="0 0 280 40">
<defs><radialGradient id="sph" cx=".38" cy=".32" r=".7"><stop offset="0" stop-color="#fff"/><stop offset=".3" stop-color="#a4d6ee"/><stop offset=".72" stop-color="#3f92c4"/><stop offset="1" stop-color="#1d5a86"/></radialGradient>
<radialGradient id="lens" cx=".4" cy=".35" r=".7"><stop offset="0" stop-color="#fff"/><stop offset="1" stop-color="#d6dcdc"/></radialGradient></defs>
<!-- 1 zoom fit -->
<g><path d="M17 19 L11 25.500" stroke="#58a2c8" stroke-width="3.400"/><circle cx="21" cy="14.500" r="6.300" fill="url(#lens)" stroke="#777" stroke-width="1.200"/><path d="M21 10.500 l-1.500 1.500h3z M21 18.500 l-1.500 -1.500h3z M17 14.500 l1.500 -1.500v3z M25 14.500 l-1.500 -1.500v3z" fill="#555"/></g>
<!-- 2 zoom area -->
<g><rect x="39.500" y="7.500" width="15" height="15" fill="#e4e4e0" stroke="#555" stroke-width="1.100"/><path d="M42 10 l4 0 m-4 0 l0 4 m0 -4 l4 4 M52 10 l-4 0 m4 0 l0 4 m0 -4 l-4 4 M52 20 l-4 0 m4 0 l0 -4 m0 4 l-4 -4" stroke="#444" stroke-width="1.100" fill="none"/><path d="M41 21 L36 26" stroke="#58a2c8" stroke-width="3.400"/><circle cx="44" cy="18.500" r="4.500" fill="url(#lens)" stroke="#777" stroke-width="1.100"/></g>
<!-- 3 zoom box -->
<g><rect x="67.500" y="8.500" width="12.500" height="12.500" fill="#f2f2ee" stroke="#444" stroke-width="1.100" stroke-dasharray="2.500 1.500"/><path d="M68 20 L62 26" stroke="#58a2c8" stroke-width="3.400"/><circle cx="71.500" cy="15.500" r="6" fill="url(#lens)" stroke="#888" stroke-width="1.100"/></g>
<!-- 4 telescope -->
<g><path d="M89 19.500 L102 9 L105.500 12.500 L95 25Z" fill="#e9e9e9" stroke="#777" stroke-width="1"/><ellipse cx="92" cy="22.300" rx="2.200" ry="3.800" transform="rotate(-40 92 22.300)" fill="#cfcfcf" stroke="#777"/><path d="M97 22 l4.500 -3.500 v2.200 h5 v2.600 h-5 v2.200z" fill="#3f8fbd"/></g>
<!-- 5 rotate -->
<g><path d="M131.500 8 L131.500 14.500 L125 14.500 L127.300 12.200 Q123 9 119 12.500 Q115.500 17 119 22 Q122 25 126.500 24 Q121.500 27.500 116.500 23.500 Q112 17.500 116.500 11 Q122.500 5.500 129.300 10.200Z" fill="#6aaed2" stroke="#4a8db4" stroke-width=".6"/></g>
<!-- 6 3d drawing view -->
<g><path d="M141.500 9.500 H152 L156.500 13.500 V24 H141.500Z" fill="#f4f4f1" stroke="#666" stroke-width="1"/><path d="M147 12.500 Q140 13 141 18.500 Q142.500 22.500 148.500 22 L148.500 19.500 L154 23.500 L148 27 L148.300 24.800 Q140.500 25.500 139.500 18.500 Q139 12 147 12.500Z" fill="#5aa5cc" stroke="#2f78a3" stroke-width=".6"/><path d="M152.500 16 l4 -1 l2.500 2 v6 l-3 2.500 l-4.500 -1 l-1.500 -3z" fill="#e6b54a" stroke="#a67c1a" stroke-width=".7"/></g>
<!-- 7 cube disabled -->
<g><path d="M168 11 L177.500 8 L184 10.500 L184 22 L176 25.500 L168 22.500Z" fill="#eaeae4" stroke="#d6d6ce" stroke-width="1"/><path d="M176 13.500 L184 10.500 V22 L176 25.500Z" fill="#f3f3ef" stroke="#d6d6ce"/><path d="M168 11 L176 13.500 L184 10.500" stroke="#d6d6ce" fill="none"/></g>
<path d="M191.500 16.500 h6 l-3 3.500z" fill="#aaa"/>
<!-- 8 eye -->
<g><path d="M206 17 Q214.500 8.500 223.500 17 Q214.500 25.500 206 17Z" fill="#dcdcd6" stroke="#bdbdb6" stroke-width="1.300"/><circle cx="214.800" cy="17" r="4" fill="#9a9a96"/><path d="M215.500 10 V25" stroke="#777" stroke-width="1"/><path d="M215.500 13 a4 4 0 0 1 0 8z" fill="#6e6e6a"/></g>
<path d="M231.500 16.500 h6 l-3 3.500z" fill="#aaa"/>
<!-- 9 sphere -->
<rect x="242.500" y="4.500" width="25" height="25" fill="#8e8e8e" stroke="#4a4a4a" stroke-width="1"/>
<ellipse cx="255" cy="24.500" rx="6" ry="1.800" fill="#6a6a6a"/>
<circle cx="255" cy="15.500" r="7.300" fill="url(#sph)"/>
</svg>
<!-- window buttons (faded) -->
<svg style="left:1770px;top:146px" width="130" height="24" viewBox="0 0 130 24"><g fill="none" stroke="#5a8aa6" stroke-width="1.300"><rect x="5.500" y="4.500" width="11" height="13"/><rect x="31.500" y="4.500" width="11" height="13"/><rect x="87" y="4.500" width="9.500" height="8"/><rect x="82.500" y="9" width="9.500" height="8.500" fill="#67a7c8"/><path d="M110 6 L120 16 M120 6 L110 16" stroke-width="1.100"/></g><g fill="#5a8aa6"><path d="M7 11 l4 -3.500 v7z"/><path d="M41 11 l-4 -3.500 v7z"/><rect x="58" y="15" width="10" height="2"/></g></svg>
<!-- sheet format icon faded -->
<svg style="left:1810px;top:180px" width="66" height="52" viewBox="1810 180 66 52"><rect x="1816.500" y="184.500" width="35" height="27" rx="1.500" fill="#78b0cd" opacity=".75"/><rect x="1818.700" y="186.700" width="30.600" height="22.600" fill="#88b9d1" stroke="#5f93b0" stroke-width="1.600"/><path d="M1833.500 199.500 H1846.500 V207 H1833.500Z M1833.500 202 H1846.500 M1833.500 204.500 H1846.500 M1839.500 199.500 V207" fill="none" stroke="#9cc6da" stroke-width="1"/><path d="M1848 217.500 L1856.500 207 L1857 213 Q1866 213 1869 206 Q1870.500 220 1858.500 222 L1858 227Z" fill="#649fc0" stroke="#7db6d2" stroke-width="1.500" stroke-linejoin="round"/></svg>
<!-- right scrollbar -->
<div class="a" style="left:1904px;top:141px;width:15px;height:832px;background:#f0f0f0"></div>
<div class="a" style="left:1904px;top:407px;width:15px;height:550px;background:#cdcdcd"></div>
<svg style="left:1904px;top:141px" width="15" height="832"><path d="M3.500 11.500 L7.500 7.500 L11.500 11.500 M3.500 823 L7.500 827 L11.500 823" fill="none" stroke="#444" stroke-width="1.700"/></svg>
<!-- task pane tabs -->
<div class="a" style="left:1894px;top:168px;width:25px;height:168px;background:#d6d6d6;border:1px solid #8a8a8a;border-right:none"></div>
<div class="a" style="left:1895px;top:169px;width:24px;height:23px;background:#fbfbfb"></div>
<svg style="left:1894px;top:168px" width="25" height="168" viewBox="0 0 25 168">
<g stroke="#8a8a8a" stroke-width="1"><path d="M0 23.500H25 M0 47.500H25 M0 72.500H25 M0 96.500H25 M0 120.500H25 M0 144.500H25"/></g>
<!-- home -->
<path d="M4.500 10.500 L13 3.500 L21.500 10.500" fill="none" stroke="#1f6a96" stroke-width="2"/><path d="M6.500 10.500 V19 H19.500 V10.500 L13 5.500Z" fill="#fff" stroke="#333" stroke-width="1.100"/><path d="M13 19 V14 H16.500 V19" fill="none" stroke="#333" stroke-width="1"/>
<!-- library -->
<g fill="#f6f6f6" stroke="#333" stroke-width="1" stroke-linejoin="miter"><path d="M5.500 30.500 L9.500 28.500 V42 L5.500 44Z"/><path d="M9.500 28.500 L11.500 29.500 V43 L9.500 42Z" fill="#ccc"/><path d="M10.500 29.500 L14.500 27.500 V42 L10.500 44Z"/><path d="M14.500 27.500 L16.500 28.500 V42.500 L14.500 42Z" fill="#ccc"/><path d="M15.500 28.500 L19.500 26.500 V41 L15.500 43Z"/><path d="M19.500 26.500 L21 27.500 V40 L19.500 41Z" fill="#ccc"/></g>
<!-- folder -->
<path d="M3.500 65.500 V50.500 H9 L10.500 53 H17 V56" fill="#fafafa" stroke="#444" stroke-width="1.100"/><path d="M3.500 65.500 L7.500 56 H22 L18 65.500Z" fill="#fff" stroke="#444" stroke-width="1.100"/>
<!-- feature tree -->
<rect x="5" y="75.500" width="16" height="15" rx="2" fill="#fff" stroke="#444" stroke-width="1.200"/><path d="M7.500 78.500 H13 V80.500 H11.500 V84 H14.500 V87.500 H7 V84 H9.500 V80.500 H7.500Z" fill="#f5c400" stroke="#a67c00" stroke-width=".6"/><rect x="15.500" y="78.500" width="3.500" height="2.500" fill="#f5c400" stroke="#a67c00" stroke-width=".6"/><rect x="16.500" y="83" width="3" height="5.500" fill="#bbb" stroke="#555" stroke-width=".6"/>
<!-- appearance ball -->
<circle cx="13" cy="108.500" r="8" fill="#e8c020"/><path d="M13 108.500 L13 100.500 A8 8 0 0 0 5 108.500Z" fill="#2a6fd0"/><path d="M13 108.500 L13 100.500 A8 8 0 0 1 21 108.500Z" fill="#e03020"/><path d="M13 108.500 L5 108.500 A8 8 0 0 0 13 116.500Z" fill="#30a030"/><circle cx="13" cy="108.500" r="8" fill="none" stroke="#555" stroke-width=".7"/><ellipse cx="11" cy="104.500" rx="3.500" ry="2" fill="#fff" opacity=".55"/>
<!-- property list -->
<rect x="5" y="124.500" width="16" height="16" rx="1.200" fill="#fff" stroke="#333" stroke-width="1.100"/><rect x="5" y="124.500" width="16" height="3" fill="#3a8fb7" stroke="#1f5f86" stroke-width=".8"/><g fill="#2d7fb5" stroke="#1b5a85" stroke-width=".5"><rect x="7" y="129.500" width="3.500" height="2.200"/><rect x="7" y="133" width="3.500" height="2.200"/><rect x="7" y="136.500" width="3.500" height="2.200"/></g><path d="M12 130.600 H19 M12 134.100 H19 M12 137.600 H19" stroke="#444" stroke-width="1"/>
<!-- chat -->
<path d="M11.500 154.500 H21.500 V162 H18.500 L18.500 164.500 L15.500 162 H11.500Z" fill="#fff" stroke="#444" stroke-width="1"/><path d="M4.500 148.500 H16.500 V157 H10 L7 160 V157 H4.500Z" fill="#3f8fbd" stroke="#1f5f86" stroke-width="1"/>
</svg>

<!-- callouts -->
<svg style="left:790px;top:530px" width="160" height="200" viewBox="790 530 160 200">
<defs><filter id="cs" x="-20%" y="-20%" width="150%" height="150%"><feGaussianBlur in="SourceAlpha" stdDeviation="2.500"/><feOffset dx="1" dy="3"/><feComponentTransfer><feFuncA type="linear" slope=".45"/></feComponentTransfer><feMerge><feMergeNode/><feMergeNode in="SourceGraphic"/></feMerge></filter></defs>
<g filter="url(#cs)" fill="#f44848">
<path d="M917 582 Q889.500 565 861 552.800 A33 33 0 1 0 861 611.200 Q889.500 599 917 582Z"/>
<path d="M922.500 676 Q895 659 866.500 646.800 A33 33 0 1 0 866.500 705.200 Q895 693 922.500 676Z"/>
</g>
<g fill="#fff" font-family="'Noto Sans CJK SC','Liberation Sans',sans-serif" font-size="36" text-anchor="middle"><text x="852.500" y="596">1</text><text x="859.500" y="691">2</text></g>
</svg>
<!-- blue selected point -->
<div class="a" style="left:920px;top:579px;width:7px;height:8px;background:#000"></div><div class="a" style="left:920px;top:579px;width:7px;height:8px;border-radius:50%;background:#4da6fa"></div>
<!-- context toolbar -->
<div class="a" style="left:928px;top:506px;width:198px;height:67px;background:#f8f8f8;border:1px solid #a9a9a9;box-shadow:3px 3px 4px rgba(0,0,0,.45)"></div>
<svg style="left:929px;top:507px" width="197" height="66" viewBox="0 0 197 66">
<!-- anchor -->
<g fill="none" stroke="#2378ac" stroke-width="2"><path d="M24 12 L14.500 21.500"/><path d="M17.500 14 L22.500 19" stroke-width="1.600"/><circle cx="25" cy="11" r="2.200" fill="#f8f8f8" stroke-width="1.500"/><path d="M10.500 15 Q10 25.500 20.500 25.500 M10.500 15 L13.500 17.500 M20.500 25.500 L18.500 22.500"/></g>
<!-- smart dim -->
<g><path d="M40 14 V27 M56 14 V27" stroke="#2378ac" stroke-width="1.800"/><path d="M42 20.500 H54" stroke="#222" stroke-width="1.400"/><path d="M41.500 20.500 l3.500 -2.500 v5z M54.500 20.500 l-3.500 -2.500 v5z" fill="#222"/><path d="M41.500 7 v7 M38 10.500 h7 M39 8 l5 5 M44 8 l-5 5" stroke="#e88a10" stroke-width=".9"/></g>
<!-- select other -->
<g><rect x="13.500" y="39.500" width="12" height="11" fill="#f4f4f4" stroke="#444" stroke-width="1.100"/><rect x="9.500" y="43.500" width="12" height="11" fill="#fff" stroke="#444" stroke-width="1.100"/><path d="M16 45.500 V56 L18.500 53.800 L20.300 58 L22 57.300 L20.300 53.200 H23.500Z" fill="#fff" stroke="#222" stroke-width="1"/></g>
<!-- zoom to selection -->
<g><path d="M46 51 L40 57" stroke="#2e86bd" stroke-width="3" stroke-linecap="round"/><circle cx="50.500" cy="46" r="6.200" fill="#fafafa" stroke="#666" stroke-width="1.300"/><path d="M47.500 44.500 H53.500 M47.500 47.500 H53.500" stroke="#222" stroke-width="1.500"/></g>
<!-- sketch relations -->
<g><path d="M71.500 50 L78.500 58" stroke="#2378ac" stroke-width="1.800"/><path d="M74 46.500 A8 8 0 1 1 88 52" fill="none" stroke="#2378ac" stroke-width="1.500"/><path d="M85.500 43 L79.500 49" stroke="#222" stroke-width="1.600"/><path d="M78.500 50 l.5 -4.500 l4 4z" fill="#222"/><g fill="#fff" stroke="#222" stroke-width="1"><rect x="68.500" y="47" width="3" height="3"/><rect x="77" y="56.500" width="3" height="3"/><rect x="86" y="50.500" width="3" height="3"/></g></g>
<!-- dimension icon -->
<g><path d="M103 55.500 L107 59.500 L117.500 49 L111 42.500" fill="none" stroke="#2378ac" stroke-width="1.800"/><path d="M104.500 50.500 L111.500 43.500" stroke="#222" stroke-width="2.400"/><path d="M102 53 l.8 -4.800 l4 4z M113.500 41.500 l-.8 4.800 l-4 -4z" fill="#222"/><path d="M99.500 38 v5 M102 38 v5 M98.500 39.500 h5 M98.500 41.500 h5" stroke="#222" stroke-width=".8"/></g>
<!-- smart dimension -->
<g><path d="M129 48 L136 56 M140.500 39.500 L147.500 46" fill="none" stroke="#2378ac" stroke-width="1.800"/><path d="M132.500 49 L140 41.500" stroke="#222" stroke-width="1.600"/><path d="M130.500 51 l.8 -4.500 l3.700 3.700z M142 39.500 l-.8 4.500 l-3.700 -3.700z" fill="#222"/></g>
</svg>
<!-- context menu -->
<div class="a" style="left:928px;top:584px;width:198px;height:350px;background:#f6f6f6;border:1px solid #a9a9a9;box-shadow:3px 3px 4px rgba(0,0,0,.45)"></div>
<!-- submenu -->
<div class="a" style="left:1122px;top:661px;width:157px;height:223px;background:#f6f6f6;border:1px solid #a9a9a9;box-shadow:3px 3px 4px rgba(0,0,0,.45)"></div>
<!-- highlight boxes -->
<div class="a" style="left:932px;top:665px;width:190px;height:21px;background:#fff;border:1px solid #a0a0a0"></div>
<div class="a" style="left:1126px;top:665px;width:146px;height:21px;background:#fff;border:1px solid #a0a0a0"></div>
<div class="a" style="left:927px;top:661px;width:348px;height:29px;border:2.500px solid #ea4a4a;border-radius:5px;box-shadow:0 1px 3px rgba(200,40,40,.5)"></div>
<div class="m" style="top:594px">选择工具</div>
<div class="m" style="top:620px">缩放/平移/旋转</div>
<div class="m" style="top:646px">最近的命令(<u>R</u>)</div>
<div class="m" style="top:670px">设定为定位点</div>
<div class="m mh" style="top:694px">几何关系</div>
<div class="m" style="top:718px">显示/删除几何关系... (<u>H</u>)</div>
<div class="m mh" style="top:742px">所选实体 (点1046)</div>
<div class="m" style="top:766px">草图工具</div>
<div class="m" style="top:790px">更改图层 (<u>L</u>)</div>
<div class="m" style="top:816px">更多尺寸(<u>M</u>)</div>
<div class="m" style="top:840px">注解(<u>A</u>)</div>
<div class="m" style="top:864px">工程视图</div>
<div class="m" style="top:888px">表格</div>
<div class="m" style="top:912px">自定义菜单(<u>M</u>)</div>
<div class="m s" style="top:670px">材料明细表 (<u>A</u>)</div>
<div class="m s" style="top:694px">系列表 (<u>B</u>)</div>
<div class="m s" style="top:718px">孔表 (<u>C</u>)</div>
<div class="m s" style="top:742px">修订表 (<u>D</u>)</div>
<div class="m s" style="top:766px">一般表格 (<u>E</u>)</div>
<div class="m s" style="top:790px">焊件切割清单 (<u>F</u>)</div>
<div class="m s" style="top:814px">焊接表 (<u>G</u>)</div>
<div class="m s" style="top:838px">折弯系数表 (<u>H</u>)</div>
<div class="m s" style="top:862px">冲孔表 (<u>I</u>)</div>
<svg style="left:929px;top:585px" width="197" height="350" viewBox="929 585 197 350">
<g stroke="#b4b4b4" stroke-width="1"><path d="M960 638.500H1125 M930 711.500H1122 M930 735.500H1122 M930 759.500H1122 M960 808.500H1125"/></g>
<g fill="#222"><path d="M1111 596 l4 3.500 l-4 3.500z M1111 622 l4 3.500 l-4 3.500z M1111 647.500 l4 3.500 l-4 3.500z M1111 672 l4 3.500 l-4 3.500z M1111 768 l4 3.500 l-4 3.500z M1111 818 l4 3.500 l-4 3.500z M1111 842 l4 3.500 l-4 3.500z M1111 866 l4 3.500 l-4 3.500z M1111 890 l4 3.500 l-4 3.500z"/></g>
<!-- display/delete relations icon -->
<g><path d="M940.500 714 V729 M935 729.500 H946" stroke="#222" stroke-width="1.500"/><ellipse cx="948.500" cy="728" rx="5" ry="3.300" fill="#fff" stroke="#222" stroke-width="1"/><circle cx="948.500" cy="728" r="1.800" fill="#222"/></g>
<!-- change layer icon -->
<g><path d="M936 796.500 L942 799.500 L952 795.500 L946 793Z" fill="#ddd" stroke="#666" stroke-width=".7"/><path d="M936 794 L942 797 L952 793 L946 790.500Z" fill="#ddd" stroke="#666" stroke-width=".7"/><path d="M936 791.500 L942 794.500 L952 790.500 L946 788Z" fill="#5aa7d2" stroke="#2a6f97" stroke-width=".8"/><path d="M942.500 803.500 L944 799.500 L951 793.500 L953.500 796 L946.500 802Z" fill="#f0c030" stroke="#8a6a10" stroke-width=".7"/><path d="M951 793.500 L953.500 796 L955 794.500 L952.500 792Z" fill="#e03030"/><path d="M942.500 803.500 L943.300 801.300 L944.800 802.800Z" fill="#222"/></g>
</svg>

<!-- bottom area bg -->
<div class="a" style="left:0;top:973px;width:1919px;height:64px;background:#f8f8f8"></div>
<div class="a" style="left:24px;top:973px;width:230px;height:1px;background:#a8a8a8"></div>
<div class="a" style="left:254px;top:973px;width:706px;height:1px;background:#6e6e6e"></div>
<!-- left ruler tail -->
<div class="a" style="left:0;top:973px;width:24px;height:15px;background:#c5cadb"></div>
<div class="a" style="left:3px;top:973px;width:17px;height:15px;background:#e8e8dc;border-left:1px solid #000;border-right:1px solid #000"></div>
<div class="a" style="left:23px;top:973px;width:1px;height:15px;background:#222"></div>
<div class="a" style="left:5px;top:960px;width:11px;height:26px;background:#fff"></div>
<svg style="left:0;top:955px" width="24" height="34" font-family="'Liberation Sans',sans-serif" font-size="10.500"><text transform="translate(14 17.500) rotate(-90)" text-anchor="middle" fill="#000">-200</text></svg>
<!-- sheet tab nav -->
<div class="a" style="left:24px;top:974px;width:64px;height:14px;background:#b2b2b2"></div>
<svg style="left:24px;top:974px" width="64" height="14"><g fill="#cfcfcf"><path d="M4 2.500 h1.500 v9 h-1.500z M12 2.500 v9 l-5.500 -4.500z M27 2.500 v9 l-5.500 -4.500z M37 2.500 v9 l5.500 -4.500z M52 2.500 v9 l5.500 -4.500z M58.500 2.500 h1.500 v9 h-1.500z"/></g><path d="M16 0 V14 M32 0 V14 M48 0 V14" stroke="#c6c6c6" stroke-width="1"/></svg>
<div class="a" style="left:158px;top:974px;width:38px;height:14px;background:#d4d4d4;border:1px solid #b0b0b0;border-top:none"></div>
<svg style="left:100px;top:973px" width="16" height="14"><path d="M1.500 1.500 H9 L13.500 6 V12.500 H1.500Z" fill="#fff" stroke="#222" stroke-width="1.100"/><path d="M7 12.500 V8 H13.500" fill="none" stroke="#222" stroke-width="1.100"/></svg>
<div class="t" style="left:117px;top:973px;font-size:13px;color:#111;letter-spacing:-.3px">图纸1</div>
<svg style="left:166px;top:974px" width="20" height="14"><path d="M4 4.500 H17 V10.500 H9.500 L8 12.500 L7 10.500 H4Z" fill="#cfe2ee" stroke="#6e8ea2" stroke-width="1"/><path d="M4.500 1 v6 M1.500 4 h6 M2.500 2 l4 4 M6.500 2 l-4 4" stroke="#f0a010" stroke-width="1.100"/></svg>
<!-- h scrollbar -->
<div class="a" style="left:960px;top:973px;width:2px;height:15px;background:#fff;border:1px solid #222;border-right:none"></div>
<div class="a" style="left:963px;top:974px;width:956px;height:14px;background:#f0f0f0"></div>
<div class="a" style="left:1020px;top:974px;width:867px;height:14px;background:#cdcdcd"></div>
<svg style="left:963px;top:974px" width="941" height="14"><path d="M11.500 3 L7.500 7 L11.500 11 M930 3 L934 7 L930 11" fill="none" stroke="#333" stroke-width="1.700"/></svg>
<!-- toolbar -->
<div class="a" style="left:0;top:1021px;width:1919px;height:1px;background:#9a9a9a"></div>
<svg style="left:0;top:0" width="1919" height="1037" viewBox="0 0 1919 1037">
<g fill="#b8b8b8"><path d="M4 994h2v2h-2z M4 998h2v2h-2z M4 1002h2v2h-2z M4 1006h2v2h-2z M4 1010h2v2h-2z M4 1014h2v2h-2z M4 1018h2v2h-2z M215 994h2v2h-2z M215 998h2v2h-2z M215 1002h2v2h-2z M215 1006h2v2h-2z M215 1010h2v2h-2z M215 1014h2v2h-2z M215 1018h2v2h-2z"/></g>
<g stroke="#8a8a8a" stroke-width="1"><path d="M210.500 990V1021 M379.500 995V1017 M1175.500 990V1021"/></g>
<!-- layer props -->
<g><path d="M18 1005 L25 1009 L34 1005 L28 1001.500Z" fill="#e4e4e4" stroke="#666" stroke-width=".8"/><path d="M18 1002.500 L25 1006.500 L34 1002.500 L28 999Z" fill="#e4e4e4" stroke="#666" stroke-width=".8"/><path d="M18 1000 L25 1004 L34 1000 L32 997.500 L27 998.500 L26 997 L19 998.500Z" fill="#7cc4e8" stroke="#2a6f97" stroke-width=".9"/><path d="M24 1014.500 L25.500 1010.500 L33 1003.500 L36 1006.500 L28.500 1013.500Z" fill="#f4d23c" stroke="#6e5208" stroke-width=".8"/><path d="M33 1003.500 L36 1006.500 L37.500 1005 L34.500 1002Z" fill="#e03030" stroke="#8a1010" stroke-width=".5"/><path d="M24 1014.500 L24.800 1012.300 L26.300 1013.700Z" fill="#222"/></g>
<g><path d="M46 1006 L53 1010 L62 1006 L56 1002.500Z" fill="#e4e4e4" stroke="#666" stroke-width=".8"/><path d="M46 1003.500 L53 1007.500 L62 1003.500 L56 1000Z" fill="#e4e4e4" stroke="#666" stroke-width=".8"/><path d="M46 1001 L53 1005 L62 1001 L60 998.500 L55 999.500 L54 998 L47 999.500Z" fill="#7cc4e8" stroke="#2a6f97" stroke-width=".9"/></g>
<g fill="#d0d0d0"><path d="M74 1009.500 L86 997 L90 999.500 L80 1010Z"/><rect x="72" y="1012" width="18" height="2.500"/></g>
<g fill="#cfcfcf"><rect x="99" y="998" width="18" height="1.500"/><rect x="99" y="1003" width="18" height="2.500"/><rect x="99" y="1009" width="18" height="4"/></g>
<g stroke="#c4c4c4" stroke-width="2"><path d="M126 1000 H144"/><path d="M126 1004 H144" stroke-dasharray="5 2"/><path d="M126 1008 H144" stroke-dasharray="2.500 2"/><path d="M126 1012 H144" stroke-dasharray="1.500 2"/></g>
<g><path d="M154 997 V1015" stroke="#222" stroke-width="1.800"/><path d="M157 1002 H166 M157 1007 H166" stroke="#222" stroke-width="1.400"/><path d="M156.500 1007 l3.500 -2.500 v5z M166.500 1002 l-3.500 -2.500 v5z" fill="#222"/><ellipse cx="165.500" cy="1010" rx="4.500" ry="3" fill="#fff" stroke="#222"/><circle cx="165.500" cy="1010" r="1.600" fill="#222"/><path d="M165.500 998 V1015" stroke="#aaa" stroke-width="1"/></g>
<g><path d="M181 998 V1010.500 H198" fill="none" stroke="#222" stroke-width="1.800"/><path d="M181.500 1003 H188.500 V1010" fill="none" stroke="#2a7fb0" stroke-width="1.800"/><rect x="180" y="1012.500" width="3" height="2.500" fill="#e02020"/><rect x="183" y="1012.500" width="3" height="2.500" fill="#f09020"/><rect x="186" y="1012.500" width="3" height="2.500" fill="#e8d820"/><rect x="189" y="1012.500" width="3" height="2.500" fill="#30a030"/><rect x="192" y="1012.500" width="3" height="2.500" fill="#2060d0"/><rect x="195" y="1012.500" width="3" height="2.500" fill="#9030c0"/></g>
<!-- filters -->
<g fill="#e0e0e0" stroke="#c6c6c6" stroke-width=".9"><path d="M232.5 999.5 h17 v2 l-6.5 3.500 v6 h-4 v-6 l-6.5 -3.500z"/><path d="M257.5 996.5 h12 v2 l-4 3.500 v3 h-4 v-3 l-4 -3.500z"/><path d="M261.5 1000 h12 v2 l-4 3.500 v3 h-4 v-3 l-4 -3.500z"/><path d="M265.5 1003.5 h12 v2 l-4 3.500 v5 h-4 v-5 l-4 -3.500z"/></g>
<g fill="#cf8fe6" stroke="#6e2288" stroke-width=".9"><path d="M283.5 996.5 h12 v2 l-4 3.500 v3 h-4 v-3 l-4 -3.500z"/><path d="M287.5 1000 h12 v2 l-4 3.500 v3 h-4 v-3 l-4 -3.500z"/><path d="M291.5 1003.5 h12 v2 l-4 3.500 v5 h-4 v-5 l-4 -3.500z"/></g>
<rect x="306.500" y="993.500" width="43" height="25" fill="#b4b4b4" stroke="#7a7a7a"/>
<path d="M313.500 996 V1011.500 L317 1008.500 L319.800 1014.500 L322 1013.500 L319.300 1007.700 H324Z" fill="#fff" stroke="#222" stroke-width="1.100" stroke-linejoin="round"/>
<path d="M339 1003.500 h6 l-3 3.500z" fill="#333"/>
<path d="M355.500 997 V1011.500 L359 1008.500 L361.800 1014.500 L364 1013.500 L361.300 1007.700 H366Z" fill="#eee" stroke="#cfcfcf" stroke-width="1.100"/><path d="M362 1004 l8 5 l-3 1.500 l2 3.500 l-2 1 l-2 -3.500 l-3 2z" fill="#d4d4d4"/>
<g transform="translate(391 993)"><circle cx="4" cy="9" r="2.300" fill="#5fb0d8" stroke="#1f5f86" stroke-width=".8"/></g><path d="M401 1007.8 h7.600 l-2.700 3 v4.200 h-2.200 v-4.200z" fill="#b23fd0"/>
<g transform="translate(418 993)"><path d="M4 4 V21" stroke="#2a7fb0" stroke-width="1.800"/></g><path d="M428 1007.8 h7.600 l-2.700 3 v4.200 h-2.200 v-4.200z" fill="#b23fd0"/>
<g transform="translate(442 993)"><rect x="1.500" y="4.500" width="13" height="13" fill="#5fb0d8" stroke="#1f5f86" stroke-width="1"/></g><path d="M455 1007.8 h7.600 l-2.700 3 v4.200 h-2.200 v-4.200z" fill="#b23fd0"/>
<g transform="translate(469 993)"><path d="M1.500 11 Q5 4 10 6.500 Q13 8 18 4.500 L18.500 12 Q14 16 10.500 20.500 Q7 17 1.500 11Z" fill="#5fb0d8" stroke="#1f5f86" stroke-width="1"/></g><path d="M482 1007.8 h7.600 l-2.700 3 v4.200 h-2.200 v-4.200z" fill="#b23fd0"/>
<g transform="translate(496 993)"><path d="M2 8 L9 4.500 L17 7 V17 L9 21 L2 17.500Z" fill="#5fb0d8" stroke="#1f5f86" stroke-width="1"/><path d="M2 8 L9.500 10.500 L17 7 M9.500 10.500 V21" stroke="#1f5f86" fill="none"/></g><path d="M509 1007.8 h7.600 l-2.700 3 v4.200 h-2.200 v-4.200z" fill="#b23fd0"/>
<g transform="translate(523 993)"><path d="M1.500 20 L16 5" stroke="#2a7fb0" stroke-width="1.600" stroke-dasharray="3.500 1.300 1.300 1.300"/></g><path d="M536 1007.8 h7.600 l-2.700 3 v4.200 h-2.200 v-4.200z" fill="#b23fd0"/>
<g transform="translate(550 993)"><path d="M2 8 L12 5 V19 L2 21Z" fill="#5fb0d8" stroke="#1f5f86" stroke-width="1"/><path d="M6.500 4 V22" stroke="#222" stroke-width="1" stroke-dasharray="2 1"/></g><path d="M563 1007.8 h7.600 l-2.700 3 v4.200 h-2.200 v-4.200z" fill="#b23fd0"/>
<g transform="translate(577 993)"><rect x="4.500" y="6.500" width="5" height="5" fill="#5fb0d8" stroke="#1f5f86" stroke-width="1"/></g><path d="M590 1007.8 h7.600 l-2.700 3 v4.200 h-2.200 v-4.200z" fill="#b23fd0"/>
<g transform="translate(604 993)"><path d="M8 4 H19 V15 M13 4 V15 M8 9.500 H19" stroke="#dcdcdc" stroke-width="1" fill="none"/><path d="M14 4.500 H2.500 V13 Q2.500 20 10 20 H15" fill="none" stroke="#2a7fb0" stroke-width="1.700"/></g><path d="M617 1007.8 h7.600 l-2.700 3 v4.200 h-2.200 v-4.200z" fill="#b23fd0"/>
<g transform="translate(631 993)"><path d="M2.500 6 V20" stroke="#222" stroke-width="1.700"/><path d="M2.500 5.500 H16" stroke="#2a7fb0" stroke-width="1.700"/><g fill="#fff" stroke="#222" stroke-width=".9"><rect x="1" y="4" width="3" height="3"/><rect x="1" y="18.500" width="3" height="3"/><rect x="14.500" y="4" width="3" height="3"/></g></g><path d="M644 1007.8 h7.600 l-2.700 3 v4.200 h-2.200 v-4.200z" fill="#b23fd0"/>
<g transform="translate(658 993)"><path d="M1.500 20 L17 4.500" stroke="#2a7fb0" stroke-width="1.700"/><rect x="7.500" y="10.500" width="3.300" height="3.300" fill="#fff" stroke="#222" stroke-width=".9"/></g><path d="M671 1007.8 h7.600 l-2.700 3 v4.200 h-2.200 v-4.200z" fill="#b23fd0"/>
<g transform="translate(685 993)"><circle cx="10" cy="12.500" r="5.500" fill="none" stroke="#222" stroke-width="1.300"/><circle cx="10" cy="12.500" r="1.700" fill="#2a7fb0"/><path d="M10 4 V8.500 M10 16.500 V21 M1.500 12.500 H6 M14 12.500 H18.500" stroke="#2a7fb0" stroke-width="1.600"/></g><path d="M698 1007.8 h7.600 l-2.700 3 v4.200 h-2.200 v-4.200z" fill="#b23fd0"/>
<g transform="translate(712 993)"><path d="M3 4.500 H8 V8 H17 V17 H8 V20.500 H3Z" fill="#f6f6f6" stroke="#444" stroke-width="1.100"/><path d="M1 12.500 H19" stroke="#2a7fb0" stroke-width="1" stroke-dasharray="2.500 1.200"/></g><path d="M725 1007.8 h7.600 l-2.700 3 v4.200 h-2.200 v-4.200z" fill="#b23fd0"/>
<g transform="translate(739 993)"><path d="M3 11 L9 17 L16 10 L10 4.500" fill="none" stroke="#2a7fb0" stroke-width="1.700"/><path d="M3.500 10.500 L9.500 4.500" stroke="#222" stroke-width="2.400"/><path d="M7 3.500 l1 1 M9 5.500 l1 1" stroke="#222"/></g><path d="M752 1007.8 h7.600 l-2.700 3 v4.200 h-2.200 v-4.200z" fill="#b23fd0"/>
<g transform="translate(766 993)"><path d="M1.500 12 L6 20.500 L13.500 4.500 H19 M1.500 12 H10" fill="none" stroke="#222" stroke-width="1.600"/></g><path d="M779 1007.8 h7.600 l-2.700 3 v4.200 h-2.200 v-4.200z" fill="#b23fd0"/>
<g transform="translate(792 993)"><rect x="1" y="4.500" width="19" height="9" fill="#fff" stroke="#222" stroke-width="1.100"/><path d="M10 4.500 V13.500" stroke="#222"/><path d="M3.500 11 V9 Q3.500 7.500 5 7.500 H6 Q7.500 7.500 7.500 9 V11Z" fill="none" stroke="#222" stroke-width=".9"/><text x="11" y="12" font-family="'Liberation Sans',sans-serif" font-size="7" font-weight="bold" fill="#222" textLength="8" lengthAdjust="spacingAndGlyphs">0.3</text></g><path d="M806 1007.8 h7.600 l-2.700 3 v4.200 h-2.200 v-4.200z" fill="#b23fd0"/>
<g transform="translate(820 993)"><path d="M7 15 L1.500 20.500" stroke="#222" stroke-width="1.800"/><circle cx="11.500" cy="10.500" r="6" fill="#fafafa" stroke="#555" stroke-width="1"/><text x="11.500" y="13.800" text-anchor="middle" font-family="'Liberation Sans',sans-serif" font-size="9" fill="#222">N</text></g><path d="M833 1007.8 h7.600 l-2.700 3 v4.200 h-2.200 v-4.200z" fill="#b23fd0"/>
<g transform="translate(846 993)"><rect x="2.500" y="4.500" width="13" height="12.500" fill="#fff" stroke="#222" stroke-width="1.100"/><text x="9" y="15.500" text-anchor="middle" font-family="'Liberation Sans',sans-serif" font-size="12" font-weight="bold" fill="#222">A</text><path d="M9 17 V19" stroke="#222"/><path d="M5.500 22.500 H12.500 L9 18.500Z" fill="#222"/></g><path d="M860 1007.8 h7.600 l-2.700 3 v4.200 h-2.200 v-4.200z" fill="#b23fd0"/>
<g transform="translate(873 993)"><path d="M1 19.500 L6 10 H13 L19 6.500" fill="none" stroke="#222" stroke-width="1.500"/><path d="M7 10 L10.500 15 L18 7.500Z" fill="#555"/><path d="M16 5.500 L19.500 11" stroke="#222" stroke-width="1.200"/></g><path d="M887 1007.8 h7.600 l-2.700 3 v4.200 h-2.200 v-4.200z" fill="#b23fd0"/>
<g transform="translate(900 993)"><path d="M2.500 4.500 V12.500 H10 Z" fill="#5fb0d8" stroke="#2a7fb0" stroke-width="1"/><path d="M1.500 15 q2.500 4 0 8 M5 15 q2.500 4 0 8 M8.500 15 q2.500 4 0 8 M12 15 q2.500 4 0 8" fill="none" stroke="#222" stroke-width="1"/></g><path d="M914 1007.8 h7.600 l-2.700 3 v4.200 h-2.200 v-4.200z" fill="#b23fd0"/>
<g transform="translate(928 993)"><path d="M6.500 16.500 L1.500 21" stroke="#222" stroke-width="1.800"/><circle cx="11.500" cy="11.500" r="6.500" fill="#fafafa" stroke="#555" stroke-width="1"/><path d="M5 11.500 H18" stroke="#555"/><text x="11.500" y="17.300" text-anchor="middle" font-family="'Liberation Sans',sans-serif" font-size="6.500" fill="#333">A1</text></g><path d="M941 1007.8 h7.600 l-2.700 3 v4.200 h-2.200 v-4.200z" fill="#b23fd0"/>
<g transform="translate(954 993)"><path d="M4 5 H15 V17.500 L9.500 22.500 L4 17.500Z" fill="#d4d4d4" stroke="#555" stroke-width="1"/><path d="M2 4.500 V18.500 H17 V4.500" fill="none" stroke="#222" stroke-width="1" stroke-dasharray="1.500 1.200"/></g><path d="M968 1007.8 h7.600 l-2.700 3 v4.200 h-2.200 v-4.200z" fill="#b23fd0"/>
<g transform="translate(981 993)"><rect x="2" y="4.500" width="15" height="14" fill="#fff" stroke="#333" stroke-width="1.100"/><text x="8" y="16.500" text-anchor="middle" font-family="'Liberation Serif',serif" font-size="13" font-weight="bold" fill="#222">A</text><circle cx="13.500" cy="8" r="1.600" fill="none" stroke="#222" stroke-width=".9"/></g><path d="M995 1007.8 h7.600 l-2.700 3 v4.200 h-2.200 v-4.200z" fill="#b23fd0"/>
<g transform="translate(1008 993)"><circle cx="10" cy="12.500" r="7.500" fill="#fff" stroke="#444" stroke-width="1"/><path d="M10 12.500 V5 A7.500 7.500 0 0 1 17.500 12.500Z M10 12.500 V20 A7.500 7.500 0 0 1 2.500 12.500Z" fill="#222"/></g><path d="M1022 1007.8 h7.600 l-2.700 3 v4.200 h-2.200 v-4.200z" fill="#b23fd0"/>
<g transform="translate(1035 993)"><path d="M2 10 H12" stroke="#222" stroke-width="1.600"/><rect x="12.500" y="6.500" width="6.500" height="6.500" fill="#5fb0d8" stroke="#1f5f86" stroke-width="1"/></g><path d="M1049 1007.8 h7.600 l-2.700 3 v4.200 h-2.200 v-4.200z" fill="#b23fd0"/>
<g transform="translate(1062 993)"><path d="M2 10 H20" stroke="#222" stroke-width="1.600"/><rect x="7.500" y="6.500" width="7" height="6.500" fill="#5fb0d8" stroke="#1f5f86" stroke-width="1"/></g><path d="M1076 1007.8 h7.600 l-2.700 3 v4.200 h-2.200 v-4.200z" fill="#b23fd0"/>
<g transform="translate(1090 993)"><rect x="1.500" y="5.500" width="14" height="13" fill="#5fb0d8" stroke="#1f5f86" stroke-width="1"/><path d="M9 12 L15 5.500 L19 9.500 L19 15 L9 15Z M9 12 L19 12 M15 5.500 L13 15 M15 5.500 L19 15" fill="#f4f4f4" stroke="#333" stroke-width=".8"/></g><path d="M1103 1007.8 h7.600 l-2.700 3 v4.200 h-2.200 v-4.200z" fill="#b23fd0"/>
<g transform="translate(1118 993)"><path d="M3.500 5 V22" stroke="#2a7fb0" stroke-width="1.700"/><path d="M9 12 L15 5.500 L19 9.500 L19 15 L9 15Z M9 12 L19 12 M15 5.500 L13 15 M15 5.500 L19 15" fill="#f4f4f4" stroke="#333" stroke-width=".8"/></g><path d="M1130 1007.8 h7.600 l-2.700 3 v4.200 h-2.200 v-4.200z" fill="#b23fd0"/>
<g transform="translate(1145 993)"><circle cx="3.500" cy="10" r="2.500" fill="#5fb0d8" stroke="#1f5f86" stroke-width=".8"/><path d="M9 12 L15 5.500 L19 9.500 L19 15 L9 15Z M9 12 L19 12 M15 5.500 L13 15 M15 5.500 L19 15" fill="#f4f4f4" stroke="#333" stroke-width=".8"/></g><path d="M1157 1007.8 h7.600 l-2.700 3 v4.200 h-2.200 v-4.200z" fill="#b23fd0"/>
</svg>
<!-- status bar -->
<div class="t st" style="left:1px">材料明细表</div>
<div class="t st" style="left:1219px;letter-spacing:.45px">X: 404mm Y: 10mm Z: 0mm</div>
<div class="t st" style="left:1393px">欠定义</div>
<div class="t st" style="left:1446px">在编辑 图纸格式 (锁定的焦点)</div>
<div class="t st" style="left:1636px">1 : 2.5</div>
<div class="t st" style="left:1815px">自定义</div>
<svg style="left:1680px;top:1024px" width="239" height="13"><path d="M7 8 l3.500 -4 l3.500 4z M188 8 l3.500 -4 l3.500 4z" fill="#444"/><path d="M218 8 L225 4 L235 7 L228 12Z M218 8 V11 L228 15 V12" fill="#eee" stroke="#444" stroke-width="1"/><circle cx="226.500" cy="8" r="2" fill="none" stroke="#444"/></svg>

<svg style="left:0;top:0;pointer-events:none" width="1919" height="1037" viewBox="0 0 1919 1037">
<g fill="rgba(255,255,255,.03)" stroke="rgba(0,0,0,.11)" stroke-width=".9">
<g transform="translate(-86.2 118.8) rotate(-27)"><text x="8" y="0" font-family="'Liberation Sans',sans-serif" font-size="40" textLength="157" lengthAdjust="spacing">Senshow</text><text x="8" y="37" font-family="'Noto Sans CJK SC',sans-serif" font-weight="300" font-size="28" textLength="158" lengthAdjust="spacing">新思诺软件</text></g>
<g transform="translate(668.8 118.8) rotate(-27)"><text x="8" y="0" font-family="'Liberation Sans',sans-serif" font-size="40" textLength="157" lengthAdjust="spacing">Senshow</text><text x="8" y="37" font-family="'Noto Sans CJK SC',sans-serif" font-weight="300" font-size="28" textLength="158" lengthAdjust="spacing">新思诺软件</text></g>
<g transform="translate(1313.8 118.8) rotate(-27)"><text x="8" y="0" font-family="'Liberation Sans',sans-serif" font-size="40" textLength="157" lengthAdjust="spacing">Senshow</text><text x="8" y="37" font-family="'Noto Sans CJK SC',sans-serif" font-weight="300" font-size="28" textLength="158" lengthAdjust="spacing">新思诺软件</text></g>
<g transform="translate(220.8 325.8) rotate(-27)"><text x="8" y="0" font-family="'Liberation Sans',sans-serif" font-size="40" textLength="157" lengthAdjust="spacing">Senshow</text><text x="8" y="37" font-family="'Noto Sans CJK SC',sans-serif" font-weight="300" font-size="28" textLength="158" lengthAdjust="spacing">新思诺软件</text></g>
<g transform="translate(974.8 324.8) rotate(-27)"><text x="8" y="0" font-family="'Liberation Sans',sans-serif" font-size="40" textLength="157" lengthAdjust="spacing">Senshow</text><text x="8" y="37" font-family="'Noto Sans CJK SC',sans-serif" font-weight="300" font-size="28" textLength="158" lengthAdjust="spacing">新思诺软件</text></g>
<g transform="translate(1627.8 325.8) rotate(-27)"><text x="8" y="0" font-family="'Liberation Sans',sans-serif" font-size="40" textLength="157" lengthAdjust="spacing">Senshow</text><text x="8" y="37" font-family="'Noto Sans CJK SC',sans-serif" font-weight="300" font-size="28" textLength="158" lengthAdjust="spacing">新思诺软件</text></g>
<g transform="translate(597.8 554.8) rotate(-27)"><text x="8" y="0" font-family="'Liberation Sans',sans-serif" font-size="40" textLength="157" lengthAdjust="spacing">Senshow</text><text x="8" y="37" font-family="'Noto Sans CJK SC',sans-serif" font-weight="300" font-size="28" textLength="158" lengthAdjust="spacing">新思诺软件</text></g>
<g transform="translate(1256.8 552.8) rotate(-27)"><text x="8" y="0" font-family="'Liberation Sans',sans-serif" font-size="40" textLength="157" lengthAdjust="spacing">Senshow</text><text x="8" y="37" font-family="'Noto Sans CJK SC',sans-serif" font-weight="300" font-size="28" textLength="158" lengthAdjust="spacing">新思诺软件</text></g>
<g transform="translate(200.8 715.8) rotate(-27)"><text x="8" y="0" font-family="'Liberation Sans',sans-serif" font-size="40" textLength="157" lengthAdjust="spacing">Senshow</text><text x="8" y="37" font-family="'Noto Sans CJK SC',sans-serif" font-weight="300" font-size="28" textLength="158" lengthAdjust="spacing">新思诺软件</text></g>
<g transform="translate(951.8 714.8) rotate(-27)"><text x="8" y="0" font-family="'Liberation Sans',sans-serif" font-size="40" textLength="157" lengthAdjust="spacing">Senshow</text><text x="8" y="37" font-family="'Noto Sans CJK SC',sans-serif" font-weight="300" font-size="28" textLength="158" lengthAdjust="spacing">新思诺软件</text></g>
<g transform="translate(1606.8 716.8) rotate(-27)"><text x="8" y="0" font-family="'Liberation Sans',sans-serif" font-size="40" textLength="157" lengthAdjust="spacing">Senshow</text><text x="8" y="37" font-family="'Noto Sans CJK SC',sans-serif" font-weight="300" font-size="28" textLength="158" lengthAdjust="spacing">新思诺软件</text></g>
<g transform="translate(577.8 947.8) rotate(-27)"><text x="8" y="0" font-family="'Liberation Sans',sans-serif" font-size="40" textLength="157" lengthAdjust="spacing">Senshow</text><text x="8" y="37" font-family="'Noto Sans CJK SC',sans-serif" font-weight="300" font-size="28" textLength="158" lengthAdjust="spacing">新思诺软件</text></g>
<g transform="translate(1229.8 946.8) rotate(-27)"><text x="8" y="0" font-family="'Liberation Sans',sans-serif" font-size="40" textLength="157" lengthAdjust="spacing">Senshow</text><text x="8" y="37" font-family="'Noto Sans CJK SC',sans-serif" font-weight="300" font-size="28" textLength="158" lengthAdjust="spacing">新思诺软件</text></g>
<g transform="translate(137.8 1067.8) rotate(-27)"><text x="8" y="0" font-family="'Liberation Sans',sans-serif" font-size="40" textLength="157" lengthAdjust="spacing">Senshow</text><text x="8" y="37" font-family="'Noto Sans CJK SC',sans-serif" font-weight="300" font-size="28" textLength="158" lengthAdjust="spacing">新思诺软件</text></g>
<g transform="translate(888.8 1068.8) rotate(-27)"><text x="8" y="0" font-family="'Liberation Sans',sans-serif" font-size="40" textLength="157" lengthAdjust="spacing">Senshow</text><text x="8" y="37" font-family="'Noto Sans CJK SC',sans-serif" font-weight="300" font-size="28" textLength="158" lengthAdjust="spacing">新思诺软件</text></g>
<g transform="translate(1541.8 1070.8) rotate(-27)"><text x="8" y="0" font-family="'Liberation Sans',sans-serif" font-size="40" textLength="157" lengthAdjust="spacing">Senshow</text><text x="8" y="37" font-family="'Noto Sans CJK SC',sans-serif" font-weight="300" font-size="28" textLength="158" lengthAdjust="spacing">新思诺软件</text></g>
</g>
<g fill="rgba(255,255,255,.03)" stroke="rgba(255,255,255,.28)" stroke-width=".9">
<g transform="translate(-87.4 117.6) rotate(-27)"><text x="8" y="0" font-family="'Liberation Sans',sans-serif" font-size="40" textLength="157" lengthAdjust="spacing">Senshow</text><text x="8" y="37" font-family="'Noto Sans CJK SC',sans-serif" font-weight="300" font-size="28" textLength="158" lengthAdjust="spacing">新思诺软件</text></g>
<g transform="translate(667.6 117.6) rotate(-27)"><text x="8" y="0" font-family="'Liberation Sans',sans-serif" font-size="40" textLength="157" lengthAdjust="spacing">Senshow</text><text x="8" y="37" font-family="'Noto Sans CJK SC',sans-serif" font-weight="300" font-size="28" textLength="158" lengthAdjust="spacing">新思诺软件</text></g>
<g transform="translate(1312.6 117.6) rotate(-27)"><text x="8" y="0" font-family="'Liberation Sans',sans-serif" font-size="40" textLength="157" lengthAdjust="spacing">Senshow</text><text x="8" y="37" font-family="'Noto Sans CJK SC',sans-serif" font-weight="300" font-size="28" textLength="158" lengthAdjust="spacing">新思诺软件</text></g>
<g transform="translate(219.6 324.6) rotate(-27)"><text x="8" y="0" font-family="'Liberation Sans',sans-serif" font-size="40" textLength="157" lengthAdjust="spacing">Senshow</text><text x="8" y="37" font-family="'Noto Sans CJK SC',sans-serif" font-weight="300" font-size="28" textLength="158" lengthAdjust="spacing">新思诺软件</text></g>
<g transform="translate(973.6 323.6) rotate(-27)"><text x="8" y="0" font-family="'Liberation Sans',sans-serif" font-size="40" textLength="157" lengthAdjust="spacing">Senshow</text><text x="8" y="37" font-family="'Noto Sans CJK SC',sans-serif" font-weight="300" font-size="28" textLength="158" lengthAdjust="spacing">新思诺软件</text></g>
<g transform="translate(1626.6 324.6) rotate(-27)"><text x="8" y="0" font-family="'Liberation Sans',sans-serif" font-size="40" textLength="157" lengthAdjust="spacing">Senshow</text><text x="8" y="37" font-family="'Noto Sans CJK SC',sans-serif" font-weight="300" font-size="28" textLength="158" lengthAdjust="spacing">新思诺软件</text></g>
<g transform="translate(596.6 553.6) rotate(-27)"><text x="8" y="0" font-family="'Liberation Sans',sans-serif" font-size="40" textLength="157" lengthAdjust="spacing">Senshow</text><text x="8" y="37" font-family="'Noto Sans CJK SC',sans-serif" font-weight="300" font-size="28" textLength="158" lengthAdjust="spacing">新思诺软件</text></g>
<g transform="translate(1255.6 551.6) rotate(-27)"><text x="8" y="0" font-family="'Liberation Sans',sans-serif" font-size="40" textLength="157" lengthAdjust="spacing">Senshow</text><text x="8" y="37" font-family="'Noto Sans CJK SC',sans-serif" font-weight="300" font-size="28" textLength="158" lengthAdjust="spacing">新思诺软件</text></g>
<g transform="translate(199.6 714.6) rotate(-27)"><text x="8" y="0" font-family="'Liberation Sans',sans-serif" font-size="40" textLength="157" lengthAdjust="spacing">Senshow</text><text x="8" y="37" font-family="'Noto Sans CJK SC',sans-serif" font-weight="300" font-size="28" textLength="158" lengthAdjust="spacing">新思诺软件</text></g>
<g transform="translate(950.6 713.6) rotate(-27)"><text x="8" y="0" font-family="'Liberation Sans',sans-serif" font-size="40" textLength="157" lengthAdjust="spacing">Senshow</text><text x="8" y="37" font-family="'Noto Sans CJK SC',sans-serif" font-weight="300" font-size="28" textLength="158" lengthAdjust="spacing">新思诺软件</text></g>
<g transform="translate(1605.6 715.6) rotate(-27)"><text x="8" y="0" font-family="'Liberation Sans',sans-serif" font-size="40" textLength="157" lengthAdjust="spacing">Senshow</text><text x="8" y="37" font-family="'Noto Sans CJK SC',sans-serif" font-weight="300" font-size="28" textLength="158" lengthAdjust="spacing">新思诺软件</text></g>
<g transform="translate(576.6 946.6) rotate(-27)"><text x="8" y="0" font-family="'Liberation Sans',sans-serif" font-size="40" textLength="157" lengthAdjust="spacing">Senshow</text><text x="8" y="37" font-family="'Noto Sans CJK SC',sans-serif" font-weight="300" font-size="28" textLength="158" lengthAdjust="spacing">新思诺软件</text></g>
<g transform="translate(1228.6 945.6) rotate(-27)"><text x="8" y="0" font-family="'Liberation Sans',sans-serif" font-size="40" textLength="157" lengthAdjust="spacing">Senshow</text><text x="8" y="37" font-family="'Noto Sans CJK SC',sans-serif" font-weight="300" font-size="28" textLength="158" lengthAdjust="spacing">新思诺软件</text></g>
<g transform="translate(136.6 1066.6) rotate(-27)"><text x="8" y="0" font-family="'Liberation Sans',sans-serif" font-size="40" textLength="157" lengthAdjust="spacing">Senshow</text><text x="8" y="37" font-family="'Noto Sans CJK SC',sans-serif" font-weight="300" font-size="28" textLength="158" lengthAdjust="spacing">新思诺软件</text></g>
<g transform="translate(887.6 1067.6) rotate(-27)"><text x="8" y="0" font-family="'Liberation Sans',sans-serif" font-size="40" textLength="157" lengthAdjust="spacing">Senshow</text><text x="8" y="37" font-family="'Noto Sans CJK SC',sans-serif" font-weight="300" font-size="28" textLength="158" lengthAdjust="spacing">新思诺软件</text></g>
<g transform="translate(1540.6 1069.6) rotate(-27)"><text x="8" y="0" font-family="'Liberation Sans',sans-serif" font-size="40" textLength="157" lengthAdjust="spacing">Senshow</text><text x="8" y="37" font-family="'Noto Sans CJK SC',sans-serif" font-weight="300" font-size="28" textLength="158" lengthAdjust="spacing">新思诺软件</text></g>
</g>
</svg>
<svg style="left:1300px;top:840px" width="570" height="110" viewBox="0 0 570 110"><g font-family="'Nothing You Could Do','Nanum Pen','Liberation Sans',sans-serif" fill="#111"><text x="14" y="47" font-size="40" textLength="345" lengthAdjust="spacingAndGlyphs">SENSNOW  SOFTWARE</text><text x="14" y="86" font-size="40" textLength="531" lengthAdjust="spacingAndGlyphs">PRINCIPAL INVESTIGATOR / JOE.</text></g></svg>
</body>
</html>
